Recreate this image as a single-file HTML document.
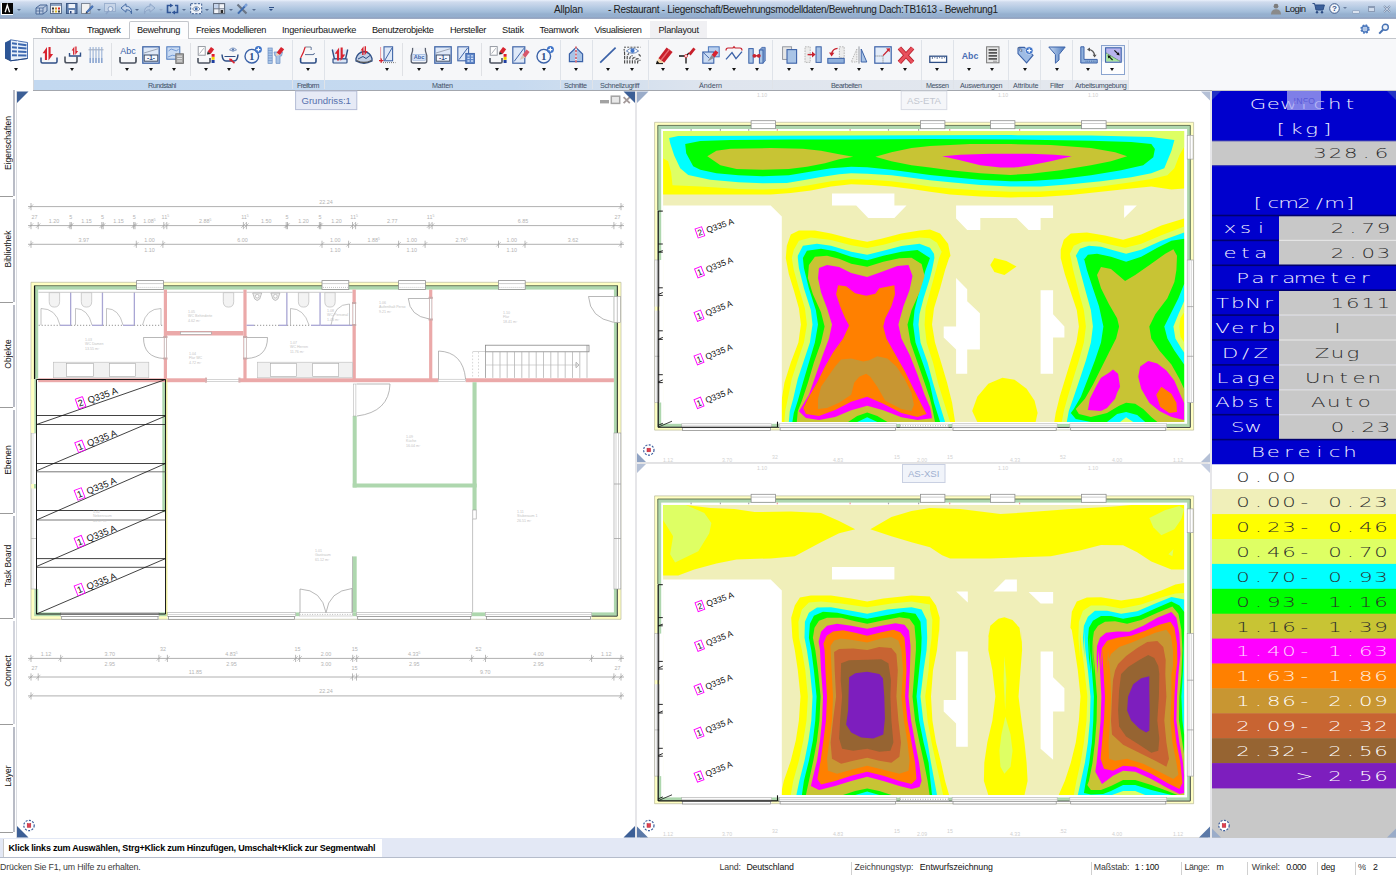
<!DOCTYPE html>
<html lang="de">
<head>
<meta charset="utf-8">
<title>Allplan - Restaurant</title>
<style>
*{box-sizing:border-box;margin:0;padding:0}
html,body{width:1396px;height:880px;overflow:hidden;background:#fff}
body{position:relative;font-family:"Liberation Sans","DejaVu Sans",sans-serif;font-size:10px;color:#1e1e1e}
.abs{position:absolute}
#title{position:absolute;left:0;top:0;width:1396px;height:19px;
 background:linear-gradient(#e9f0fb 0,#cfdbed 2px,#c2d2e8 5px,#b3c9e2 8px,#a2bcd9 12px,#96b0cf 14px,#94aece 17px,#919fbb 18px,#a6b2ca 19px)}
#title .t{position:absolute;top:3px;font-size:11px;color:#1b1b1b;white-space:nowrap;letter-spacing:-0.1px}
#tabs{position:absolute;left:0;top:19px;width:1396px;height:20px;background:#fff}
#tabs .tab{position:absolute;top:6px;font-size:10px;color:#1a1a1a;white-space:nowrap;letter-spacing:-0.25px}
#tabline{position:absolute;left:33px;top:38px;width:1363px;height:1px;background:#c3c6cb}
#tabact{position:absolute;left:129px;top:21px;width:60px;height:18px;border:1px solid #c3c6cb;border-bottom:none;background:#fdfdfe;border-radius:2px 2px 0 0}
#tablast{position:absolute;left:650px;top:21px;width:57px;height:17px;background:#f0f0f3}
#ribbon{position:absolute;left:33px;top:39px;width:1363px;height:51px;background:#f5f6f8;border-left:1px solid #d4d7dc}
#ribbon .bg{position:absolute;left:0;top:0;width:1095px;height:41px;background:#f6f7f9}
#ribbon .lab{position:absolute;left:0;top:41px;width:1095px;height:10px;background:linear-gradient(90deg,#c2d8f0 0,#c6daf0 480px,#d2dfee 580px,#dfe5ee 680px,#e4e8ee 1095px)}
#ribbon .rest{position:absolute;left:1095px;top:0;width:268px;height:51px;background:#f7f8fa}
#ribline{position:absolute;left:33px;top:90px;width:1363px;height:1px;background:#a3a7ae}
.glab{position:absolute;top:81px;font-size:7px;color:#44546a;white-space:nowrap;text-align:center;letter-spacing:-0.1px}
.gsep{position:absolute;top:40px;width:1px;height:49px;background:#dfe3e9}
.isep{position:absolute;top:43px;width:1px;height:33px;background:#dfe1e5}
.dd{position:absolute;top:67px;width:0;height:0;border-left:2.5px solid transparent;border-right:2.5px solid transparent;border-top:3px solid #111}
svg{position:absolute;overflow:visible}
#side{position:absolute;left:0;top:90px;width:16px;height:748px;background:#fff}
#side .st{position:absolute;left:-42px;width:100px;height:12px;line-height:12px;text-align:center;font-size:8.5px;color:#111;transform:rotate(-90deg);white-space:nowrap}
#side .sl{position:absolute;left:0;width:13px;height:1px;background:#9b9b9b}
#side .sv{position:absolute;left:13px;width:2px;background:#c9c9cf}
.vp{position:absolute;background:#fff;overflow:hidden}
.vtitle{position:absolute;font-size:10px;text-align:center;white-space:nowrap}
#cmd{position:absolute;left:0;top:838px;width:1396px;height:20px;background:#e3e8f5;border-bottom:1px solid #b5bccb}
#cmd .box{position:absolute;left:3px;top:1px;width:379px;height:18px;background:#fff;border-left:1px solid #c8c8c8}
#cmd .txt{position:absolute;left:8px;top:4px;font-size:9.2px;font-weight:bold;color:#000;white-space:nowrap;letter-spacing:-0.12px}
#status{position:absolute;left:0;top:859px;width:1396px;height:21px;background:#fff}
#status span{position:absolute;top:4px;font-size:8.8px;color:#333;white-space:nowrap;letter-spacing:-0.15px}
#status i{position:absolute;top:3px;width:1px;height:13px;background:#cfcfcf}
#info{position:absolute;left:1212px;top:90px;width:184px;height:748px;background:#c8c8c8;overflow:hidden;
 font-family:"DejaVu Sans Light","DejaVu Sans","Liberation Sans",sans-serif;font-weight:200}
#info .r{position:absolute;left:0;width:184px;height:25px;font-size:14px;line-height:25px;white-space:nowrap;letter-spacing:4.2px}
#info .r span{position:absolute;top:0;height:25px}
</style>
</head>
<body>
<div id="title">
<div class="abs" style="left:1px;top:2.5px;width:12px;height:12.5px;background:#fff"></div><div class="abs" style="left:2px;top:3px;width:10.5px;height:11px;background:#050505"></div>
<svg style="left:2px;top:3px" width="11" height="11" viewBox="0 0 11 11"><path d="M3.2 9.2 L5.3 2.2 L7.6 9.2" fill="none" stroke="#fff" stroke-width="1.3"/></svg>
<div class="abs" style="left:16.5px;top:8.5px;width:0;height:0;border-left:2px solid transparent;border-right:2px solid transparent;border-top:2.5px solid #5b7193"></div>
<svg style="left:35px;top:3px" width="13" height="12" viewBox="0 0 13 12"><path d="M1 5 L5 2 L12 2 L12 8 L8 11 L1 11 Z" fill="#b9c9e0" stroke="#4a6897" stroke-width="1"/><path d="M1 5 H8 V11 M8 5 L12 2 M4.5 5 V11 M1 8 H8" fill="none" stroke="#4a6897" stroke-width=".8"/></svg>
<svg style="left:50px;top:3px" width="12" height="11" viewBox="0 0 12 11"><rect x=".5" y=".5" width="11" height="10" fill="#f4f4f0" stroke="#5b6f8f"/><rect x="1" y="1" width="10" height="2" fill="#8ea4c4"/><rect x="2" y="4.5" width="2" height="2" fill="#333"/><rect x="5" y="4.5" width="2" height="2" fill="#c82"/><rect x="8" y="4.5" width="2" height="2" fill="#d22"/><rect x="5" y="7.5" width="2" height="2" fill="#db2"/><rect x="8" y="7.5" width="2" height="2" fill="#444"/><rect x="2" y="7.5" width="2" height="2" fill="#777"/></svg>
<svg style="left:66px;top:3px" width="12" height="11" viewBox="0 0 12 11"><rect x=".5" y=".5" width="10.5" height="10" fill="#5f7fae" stroke="#3c5783"/><rect x="2.5" y="1" width="6.5" height="4" fill="#eef2f8"/><rect x="3" y="7" width="5.5" height="3.5" fill="#e9edf5"/><rect x="4" y="8" width="1.5" height="2.5" fill="#27417a"/></svg>
<svg style="left:81px;top:3px" width="13" height="11" viewBox="0 0 13 11"><rect x=".5" y=".5" width="8.5" height="10" fill="#f1f1f1" stroke="#7d8796"/><path d="M5 9 L11 2.5 L12.3 3.7 L6.4 10 Z" fill="#4b7ac2" stroke="#2e5597" stroke-width=".6"/><path d="M5 9 L4.6 10.6 L6.4 10 Z" fill="#222"/></svg>
<div class="abs" style="left:96.5px;top:8.5px;width:0;height:0;border-left:2px solid transparent;border-right:2px solid transparent;border-top:2.5px solid #5b7193"></div>
<svg style="left:104px;top:3px" width="13" height="12" viewBox="0 0 13 12"><rect x=".5" y=".5" width="11" height="8" fill="#c9d6e8" stroke="#93a9c9" opacity=".8"/><circle cx="6.5" cy="6" r="2.5" fill="#dfe8f4" stroke="#8aa2c6"/><path d="M4.6 8 L2 11" stroke="#8aa2c6" stroke-width="1.4"/></svg>
<svg style="left:120px;top:3px" width="13" height="12" viewBox="0 0 13 12"><path d="M1 5 L6 .8 L6 3.2 C10 3.2 12 6 11.5 10.8 C10.8 8 9.5 6.8 6 6.8 L6 9.2 Z" fill="#c5d5ea" stroke="#456aa3" stroke-width="1"/></svg>
<div class="abs" style="left:135px;top:8.5px;width:0;height:0;border-left:2px solid transparent;border-right:2px solid transparent;border-top:2.5px solid #5b7193"></div>
<svg style="left:143px;top:3px" width="13" height="12" viewBox="0 0 13 12"><path d="M12 5 L7 .8 L7 3.2 C3 3.2 1 6 1.5 10.8 C2.2 8 3.5 6.8 7 6.8 L7 9.2 Z" fill="#b4c7e0" stroke="#8ea6c8" stroke-width="1"/></svg>
<div class="abs" style="left:158.5px;top:8.5px;width:0;height:0;border-left:2px solid transparent;border-right:2px solid transparent;border-top:2.5px solid #9db0cc"></div>
<svg style="left:166px;top:3px" width="13" height="12" viewBox="0 0 13 12"><path d="M4 2.5 H1.5 V9.5 H5 M9 2.5 H11.5 V9.5 H8" fill="none" stroke="#2f5597" stroke-width="1.6"/><path d="M4 .5 L7.3 2.5 L4 4.5 Z M9 7.5 L5.7 9.5 L9 11.5 Z" fill="#2f5597"/></svg>
<div class="abs" style="left:182px;top:8.5px;width:0;height:0;border-left:2px solid transparent;border-right:2px solid transparent;border-top:2.5px solid #5b7193"></div>
<svg style="left:190px;top:3px" width="13" height="12" viewBox="0 0 13 12"><rect x=".7" y=".7" width="11" height="10" fill="#eef3fa" stroke="#3b5a8f" stroke-width="1" stroke-dasharray="2.2 1.4"/><path d="M2.5 6 C4.5 3 8 3 10 6 C8 8.6 4.5 8.6 2.5 6Z" fill="#fff" stroke="#54698c" stroke-width=".8"/><circle cx="6.2" cy="5.8" r="1.5" fill="#3f6fb8"/></svg>
<div class="abs" style="left:205px;top:8.5px;width:0;height:0;border-left:2px solid transparent;border-right:2px solid transparent;border-top:2.5px solid #5b7193"></div>
<svg style="left:213px;top:3px" width="13" height="12" viewBox="0 0 13 12"><rect x=".6" y=".6" width="11" height="10" fill="#f2f4f8" stroke="#5f6a7c" stroke-width="1.1"/><rect x="1.2" y="1.2" width="4.6" height="4.2" fill="#c3d3ec"/><path d="M6 .6 V10.6 M.6 5.8 H11.6" stroke="#5f6a7c" stroke-width=".9"/><rect x="7.6" y="7" width="2.6" height="3" fill="#2b2b2b"/></svg>
<div class="abs" style="left:228.5px;top:8.5px;width:0;height:0;border-left:2px solid transparent;border-right:2px solid transparent;border-top:2.5px solid #5b7193"></div>
<svg style="left:236px;top:3px" width="13" height="12" viewBox="0 0 13 12"><path d="M1.5 1.5 L10.5 10.5" stroke="#6b7686" stroke-width="2.2"/><path d="M10.8 1.2 L2 10.6" stroke="#3f6cae" stroke-width="2"/><path d="M10.8 1.2 L8.6 3.5" stroke="#7fa5dd" stroke-width="2.2"/></svg>
<div class="abs" style="left:252px;top:8.5px;width:0;height:0;border-left:2px solid transparent;border-right:2px solid transparent;border-top:2.5px solid #5b7193"></div>
<div class="abs" style="left:268.5px;top:7px;width:5px;height:1px;background:#2f4f86"></div>
<div class="abs" style="left:269px;top:9px;width:0;height:0;border-left:2px solid transparent;border-right:2px solid transparent;border-top:2.5px solid #2f4f86"></div>
<span style="position:absolute;left:554.0px;top:4.7px;font-size:10px;line-height:10px;letter-spacing:-0.17px;white-space:nowrap;color:#202020;">Allplan</span>
<span style="position:absolute;left:608.0px;top:4.7px;font-size:10px;line-height:10px;letter-spacing:-0.31px;white-space:nowrap;color:#202020;">- Restaurant - Liegenschaft/Bewehrungsmodelldaten/Bewehrung Dach:TB1613 - Bewehrung1</span>
<svg style="left:1270px;top:3px" width="12" height="12" viewBox="0 0 12 12"><circle cx="6" cy="3.2" r="2.4" fill="#7d7d7d"/><path d="M1 11.5 C1 7.5 3.5 6.2 6 6.2 C8.5 6.2 11 7.5 11 11.5 Z" fill="#8a8a8a"/></svg>
<span style="position:absolute;left:1285.0px;top:4.2px;font-size:9.5px;line-height:9.5px;letter-spacing:-0.56px;white-space:nowrap;color:#1a1a1a;">Login</span>
<svg style="left:1312px;top:2px" width="14" height="12" viewBox="0 0 14 12"><path d="M.5 1.5 H2.6 L4 8 H11 L12.4 3 H3.2" fill="#3b5f9a" stroke="#2d4d84" stroke-width="1"/><circle cx="5" cy="10.3" r="1.2" fill="#2d4d84"/><circle cx="10" cy="10.3" r="1.2" fill="#2d4d84"/></svg>
<svg style="left:1328.5px;top:2.5px" width="11" height="11" viewBox="0 0 11 11"><circle cx="5.5" cy="5.5" r="4.8" fill="#f4f7fb" stroke="#3d5a8c" stroke-width="1"/><text x="5.5" y="8.3" font-size="8" font-weight="bold" text-anchor="middle" fill="#2d4d84" font-family="Liberation Sans, sans-serif">?</text></svg>
<div class="abs" style="left:1342.5px;top:7px;width:0;height:0;border-left:2px solid transparent;border-right:2px solid transparent;border-top:2.5px solid #6c809f"></div>
<div class="abs" style="left:1353px;top:11px;width:6px;height:1.5px;background:#d9e2ef;box-shadow:0 0 0 .5px #8b9bb5"></div>
<div class="abs" style="left:1368px;top:6px;width:7px;height:5.5px;border:1px solid #8b9bb5;border-top-width:2px;background:#cfdaea"></div>
<svg style="left:1383px;top:5px" width="8" height="8" viewBox="0 0 8 8"><path d="M1 1 L7 7 M7 1 L1 7" stroke="#7f90ac" stroke-width="1.8"/><path d="M1 1 L7 7 M7 1 L1 7" stroke="#dbe4f1" stroke-width=".7"/></svg>
</div>
<div id="tabline"></div><div id="tabact"></div><div id="tablast"></div>
<span style="position:absolute;left:41.0px;top:25.8px;font-size:9.2px;line-height:9.2px;letter-spacing:-0.65px;white-space:nowrap;color:#161616;">Rohbau</span>
<span style="position:absolute;left:87.0px;top:25.8px;font-size:9.2px;line-height:9.2px;letter-spacing:-0.57px;white-space:nowrap;color:#161616;">Tragwerk</span>
<span style="position:absolute;left:137.0px;top:25.8px;font-size:9.2px;line-height:9.2px;letter-spacing:-0.38px;white-space:nowrap;color:#161616;">Bewehrung</span>
<span style="position:absolute;left:196.0px;top:25.8px;font-size:9.2px;line-height:9.2px;letter-spacing:-0.30px;white-space:nowrap;color:#161616;">Freies Modellieren</span>
<span style="position:absolute;left:282.0px;top:25.8px;font-size:9.2px;line-height:9.2px;letter-spacing:-0.23px;white-space:nowrap;color:#161616;">Ingenieurbauwerke</span>
<span style="position:absolute;left:372.0px;top:25.8px;font-size:9.2px;line-height:9.2px;letter-spacing:-0.32px;white-space:nowrap;color:#161616;">Benutzerobjekte</span>
<span style="position:absolute;left:450.0px;top:25.8px;font-size:9.2px;line-height:9.2px;letter-spacing:-0.32px;white-space:nowrap;color:#161616;">Hersteller</span>
<span style="position:absolute;left:502.0px;top:25.8px;font-size:9.2px;line-height:9.2px;letter-spacing:-0.20px;white-space:nowrap;color:#161616;">Statik</span>
<span style="position:absolute;left:539.5px;top:25.8px;font-size:9.2px;line-height:9.2px;letter-spacing:-0.35px;white-space:nowrap;color:#161616;">Teamwork</span>
<span style="position:absolute;left:594.5px;top:25.8px;font-size:9.2px;line-height:9.2px;letter-spacing:-0.37px;white-space:nowrap;color:#161616;">Visualisieren</span>
<span style="position:absolute;left:658.5px;top:25.8px;font-size:9.2px;line-height:9.2px;letter-spacing:-0.27px;white-space:nowrap;color:#161616;">Planlayout</span>
<svg style="left:1359px;top:23px" width="12" height="12" viewBox="0 0 12 12"><circle cx="6" cy="6" r="3.6" fill="none" stroke="#4b78bd" stroke-width="2.2" stroke-dasharray="1.6 1.25"/><circle cx="6" cy="6" r="3" fill="#dbe6f6" stroke="#4b78bd" stroke-width="1.3"/><circle cx="6" cy="6" r="1.2" fill="#fff" stroke="#4b78bd" stroke-width=".6"/></svg>
<svg style="left:1378px;top:23px" width="12" height="12" viewBox="0 0 12 12"><circle cx="7.3" cy="4.3" r="3" fill="#eef3fa" stroke="#4672b4" stroke-width="1.4"/><path d="M5 6.7 L1.2 10.6" stroke="#4672b4" stroke-width="2"/></svg>
<div id="ribbon"><div class="bg"></div><div class="lab"></div><div class="rest"></div></div><div id="ribline"></div>
<div class="gsep" style="left:291.5px"></div>
<div class="gsep" style="left:324.0px"></div>
<div class="gsep" style="left:560.0px"></div>
<div class="gsep" style="left:591.5px"></div>
<div class="gsep" style="left:647.5px"></div>
<div class="gsep" style="left:772.0px"></div>
<div class="gsep" style="left:921.0px"></div>
<div class="gsep" style="left:952.5px"></div>
<div class="gsep" style="left:1007.5px"></div>
<div class="gsep" style="left:1040.0px"></div>
<div class="gsep" style="left:1072.0px"></div>
<div class="gsep" style="left:1127.5px"></div>
<div class="isep" style="left:111.0px"></div>
<div class="isep" style="left:190.0px"></div>
<div class="isep" style="left:402.0px"></div>
<div class="isep" style="left:481.0px"></div>
<span style="position:absolute;left:148.0px;top:81.5px;font-size:7.2px;line-height:7.2px;letter-spacing:-0.49px;white-space:nowrap;color:#3f4f66;">Rundstahl</span>
<span style="position:absolute;left:297.0px;top:81.5px;font-size:7.2px;line-height:7.2px;letter-spacing:-0.61px;white-space:nowrap;color:#3f4f66;">Freiform</span>
<span style="position:absolute;left:432.0px;top:81.5px;font-size:7.2px;line-height:7.2px;letter-spacing:-0.20px;white-space:nowrap;color:#3f4f66;">Matten</span>
<span style="position:absolute;left:564.0px;top:81.5px;font-size:7.2px;line-height:7.2px;letter-spacing:-0.43px;white-space:nowrap;color:#3f4f66;">Schnitte</span>
<span style="position:absolute;left:600.0px;top:81.5px;font-size:7.2px;line-height:7.2px;letter-spacing:-0.28px;white-space:nowrap;color:#3f4f66;">Schnellzugriff</span>
<span style="position:absolute;left:699.0px;top:81.5px;font-size:7.2px;line-height:7.2px;letter-spacing:-0.04px;white-space:nowrap;color:#3f4f66;">Ändern</span>
<span style="position:absolute;left:831.0px;top:81.5px;font-size:7.2px;line-height:7.2px;letter-spacing:-0.43px;white-space:nowrap;color:#3f4f66;">Bearbeiten</span>
<span style="position:absolute;left:926.0px;top:81.5px;font-size:7.2px;line-height:7.2px;letter-spacing:-0.44px;white-space:nowrap;color:#3f4f66;">Messen</span>
<span style="position:absolute;left:960.0px;top:81.5px;font-size:7.2px;line-height:7.2px;letter-spacing:-0.32px;white-space:nowrap;color:#3f4f66;">Auswertungen</span>
<span style="position:absolute;left:1013.0px;top:81.5px;font-size:7.2px;line-height:7.2px;letter-spacing:-0.16px;white-space:nowrap;color:#3f4f66;">Attribute</span>
<span style="position:absolute;left:1050.0px;top:81.5px;font-size:7.2px;line-height:7.2px;letter-spacing:-0.40px;white-space:nowrap;color:#3f4f66;">Filter</span>
<span style="position:absolute;left:1075.0px;top:81.5px;font-size:7.2px;line-height:7.2px;letter-spacing:-0.32px;white-space:nowrap;color:#3f4f66;">Arbeitsumgebung</span>
<svg style="left:4px;top:39px" width="25" height="23" viewBox="0 0 25 23"><path d="M1 3.5L6.5 .8V21.8L1 19Z" fill="#2c5596"/><path d="M6.5 .8L23.5 3.5V19.5L6.5 21.8Z" fill="#e9f0fa" stroke="#3b62a8" stroke-width=".9"/><path d="M8 4.2L22.5 6.2M8 8.2L22.5 9.6M8 12.2L22.5 13M8 16.2L22.5 16.4" stroke="#3d68b0" stroke-width="2"/><path d="M13.5 2V21" stroke="#e9f0fa" stroke-width="1.2"/><path d="M1 19L6.5 21.8L23.5 19.5" fill="none" stroke="#24457f" stroke-width="1"/></svg>
<div class="dd" style="left:13.7px;top:67.5px"></div>
<svg style="left:40.4px;top:46px" width="18" height="18" viewBox="0 0 18 18"><path d="M1 11.5V15.5Q1 17 2.5 17H15.5Q17 17 17 15.5V11.5" fill="none" stroke="#2f4f86" stroke-width="1.5"/><g transform="translate(0.3 0) scale(1)"><path d="M6.7 14V1L2.3 7.2H4.6V14Z" fill="#d8232f"/><path d="M8.2 1H10.3V8H12.8L8.2 14.6Z" fill="#d8232f"/></g></svg>
<svg style="left:63.7px;top:46px" width="18" height="18" viewBox="0 0 18 18"><path d="M5.5 7V10H16.5V6.5" fill="none" stroke="#2f4f86" stroke-width="1.4"/><path d="M1 10.5V15Q1 16.8 2.8 16.8H11.2Q13 16.8 13 15V10.5" fill="none" stroke="#4c5360" stroke-width="1.6"/><g transform="translate(6.2 0) scale(0.62)"><path d="M6.7 14V1L2.3 7.2H4.6V14Z" fill="#d8232f"/><path d="M8.2 1H10.3V8H12.8L8.2 14.6Z" fill="#d8232f"/></g></svg>
<div class="dd" style="left:70.2px;top:67.5px"></div>
<svg style="left:87.0px;top:46px" width="18" height="18" viewBox="0 0 18 18"><path d="M1.5 3.8H16.5" stroke="#8a93a3" stroke-width=".8"/><path d="M3.2 1V17M6.1 1V17M9 1V17M11.9 1V17M14.8 1V17" stroke="#9bb3d6" stroke-width="1.1"/><path d="M3.2 12V17M6.1 12V17M9 12V17M11.9 12V17M14.8 12V17" stroke="#7f9ccc" stroke-width="1.1"/></svg>
<svg style="left:118.9px;top:46px" width="18" height="18" viewBox="0 0 18 18"><text x="9" y="8.3" font-family="Liberation Sans, sans-serif" font-size="8.6" fill="#3b62a8" text-anchor="middle" textLength="15.5" lengthAdjust="spacingAndGlyphs">Abc</text><path d="M1 11V15.5Q1 17 2.5 17H15.5Q17 17 17 15.5V11" fill="none" stroke="#4c5360" stroke-width="1.7"/></svg>
<div class="dd" style="left:125.4px;top:67.5px"></div>
<svg style="left:142.2px;top:46px" width="18" height="18" viewBox="0 0 18 18"><rect x=".8" y=".8" width="16.4" height="16.4" fill="#dfe9f8" stroke="#4166a8" stroke-width="1.3"/><path d="M2 7L16 2.8" stroke="#8a93a3" stroke-width=".8"/><rect x="2.2" y="9" width="13.6" height="6.2" fill="#f6f8fc" stroke="#3a4a66" stroke-width="1"/><text x="9" y="14.3" font-family="Liberation Sans, sans-serif" font-size="6.4" font-weight="bold" fill="#2f4f86" text-anchor="middle">-1-</text></svg>
<div class="dd" style="left:148.7px;top:67.5px"></div>
<svg style="left:165.7px;top:46px" width="18" height="18" viewBox="0 0 18 18"><rect x=".8" y=".8" width="13" height="12.4" fill="#c9dbf3" stroke="#4a78bd" stroke-width="1"/><path d="M2.5 5Q5 1.5 8 4T12.5 3M2 11Q6 8 11 10" fill="none" stroke="#6b93d0" stroke-width=".9"/><rect x="9.8" y="7.8" width="7.6" height="9.6" fill="#a3a3a3" stroke="#6c6c6c" stroke-width=".9"/><path d="M11.2 10.2H16M11.2 12.6H16M11.2 15H16" stroke="#e8e8e8" stroke-width="1"/></svg>
<div class="dd" style="left:172.2px;top:67.5px"></div>
<svg style="left:197.0px;top:46px" width="18" height="18" viewBox="0 0 18 18"><rect x="1.2" y=".6" width="7" height="8.6" fill="#fff" stroke="#8a8f99" stroke-width=".9"/><path d="M2.6 7.6L6.8 2.2" stroke="#8a8f99" stroke-width=".7"/><path d="M1 12V16Q1 17 2.2 17H11.8Q13 17 13 16V12" fill="none" stroke="#4c5360" stroke-width="1.6"/><path d="M10.6 5.6L14 1L17.2 3.3L13.7 7.9Z" fill="#d8232f"/><path d="M10.6 5.6L13.7 7.9L10 8.6Z" fill="#222"/><rect x="14.6" y="8" width="3" height="2.8" fill="#e0202c"/><rect x="14.6" y="11" width="3" height="2.8" fill="#f2d500"/><rect x="14.6" y="14" width="3" height="3" fill="#1f3fa0"/></svg>
<div class="dd" style="left:203.5px;top:67.5px"></div>
<svg style="left:220.6px;top:46px" width="18" height="18" viewBox="0 0 18 18"><path d="M1 8.5Q1.5 15 5 15H13Q16.5 15 17 8.5" fill="none" stroke="#2f4f86" stroke-width="1.5"/><path d="M3.5 10.5H14.5" stroke="#2f4f86" stroke-width="1"/><path d="M8.5 3.8Q12 .2 15.5 3.8Q12 6.8 8.5 3.8Z" fill="#fff" stroke="#5a7ab0" stroke-width=".8"/><circle cx="12" cy="3.6" r="1.2" fill="#5a7ab0"/><path d="M13.5 17.2L9.2 13.4" stroke="#d8232f" stroke-width="1.6"/><path d="M8 12.4L11.6 13L9 15.6Z" fill="#d8232f"/></svg>
<div class="dd" style="left:227.1px;top:67.5px"></div>
<svg style="left:244.2px;top:46px" width="18" height="18" viewBox="0 0 18 18"><circle cx="7.8" cy="10.2" r="6.8" fill="#f6f8fc" stroke="#3b62a8" stroke-width="1.4"/><text x="7.8" y="14" font-family="Liberation Serif, serif" font-size="11" font-weight="bold" fill="#2f4f86" text-anchor="middle">1</text><circle cx="14.4" cy="3.6" r="3.5" fill="#3f74c9"/><path d="M12.4 3.6H16.4M14.4 1.6V5.6" stroke="#fff" stroke-width="1.2"/></svg>
<div class="dd" style="left:250.7px;top:67.5px"></div>
<svg style="left:266.8px;top:46px" width="18" height="18" viewBox="0 0 18 18"><rect x="1" y="2" width="4.2" height="15.4" fill="#a9c4e6" stroke="#6a8fc4" stroke-width=".7"/><path d="M1 4.5H5.2M1 7H5.2M1 9.5H5.2M1 12H5.2M1 14.5H5.2" stroke="#6a8fc4" stroke-width=".6"/><path d="M7 6H15.5L14.5 10H13V17.4H9V10H8Z" fill="#a9c4e6" stroke="#6a8fc4" stroke-width=".7"/><path d="M9.6 6.8L14 1L17.2 3.3L12.8 9Z" fill="#d8232f"/><path d="M9.6 6.8L12.8 9L9 9.8Z" fill="#f4d0b0"/></svg>
<svg style="left:299.4px;top:46px" width="18" height="18" viewBox="0 0 18 18"><path d="M6.2 1H12" stroke="#7a8494" stroke-width="1"/><path d="M6.2 1Q4.5 7 1.6 12" fill="none" stroke="#d8232f" stroke-width="1.2"/><path d="M1.6 12V15.4Q1.6 17 3.2 17H15.4Q17 17 17 15.4V12" fill="none" stroke="#2f4f86" stroke-width="1.6"/><path d="M12 1Q12.5 3 12 4M6 8.6H14Q15.4 8.6 15.4 7" fill="none" stroke="#5b7198" stroke-width="1"/></svg>
<div class="dd" style="left:305.9px;top:67.5px"></div>
<svg style="left:330.7px;top:46px" width="18" height="18" viewBox="0 0 18 18"><path d="M1.3 3.5L3.4 13H14.6L16.7 3.5" fill="#dfe9f8" stroke="#2f4f86" stroke-width="1.4"/><path d="M2 13H16V16.2Q16 17 15 17H3Q2 17 2 16.2Z" fill="#dbe6f6" stroke="#2f4f86" stroke-width="1.2"/><g transform="translate(1.4 0.5) scale(1.0)"><path d="M6.7 14V1L2.3 7.2H4.6V14Z" fill="#d8232f"/><path d="M8.2 1H10.3V8H12.8L8.2 14.6Z" fill="#d8232f"/></g></svg>
<svg style="left:354.8px;top:46px" width="18" height="18" viewBox="0 0 18 18"><path d="M1 12.5Q2.5 6.5 9 5.5Q15.5 6.5 17 12.5V15Q9 19.5 1 15Z" fill="#c2d0e6" stroke="#2f4f86" stroke-width="1.3"/><path d="M3 13L8 10.5L11 12.5L15 9.5" fill="none" stroke="#2f4f86" stroke-width="1"/><path d="M1.5 14.5Q9 18.5 16.5 14.5" fill="none" stroke="#555" stroke-width="1.4"/><g transform="translate(4 -0.5) scale(0.68)"><path d="M6.7 14V1L2.3 7.2H4.6V14Z" fill="#d8232f"/><path d="M8.2 1H10.3V8H12.8L8.2 14.6Z" fill="#d8232f"/></g></svg>
<svg style="left:378.0px;top:46px" width="18" height="18" viewBox="0 0 18 18"><rect x="6" y=".8" width="8.6" height="14" fill="#dfe9f8" stroke="#4166a8" stroke-width="1.1"/><path d="M7 14L14 2" stroke="#4166a8" stroke-width="1"/><path d="M2.6 1.5V13" stroke="#d8232f" stroke-width=".9" stroke-dasharray="1 1"/><path d="M5 16.6H17.5" stroke="#666" stroke-width=".9" stroke-dasharray="1 1"/><path d="M1 14.6H5.4M3.2 12.4V16.8" stroke="#d8232f" stroke-width="1.4"/></svg>
<div class="dd" style="left:384.5px;top:67.5px"></div>
<svg style="left:410.4px;top:46px" width="18" height="18" viewBox="0 0 18 18"><path d="M2.6 1.8Q3.2 5 1.2 9.5V15Q1.2 17 3.2 17H14.8Q16.8 17 16.8 15V9.5Q14.8 5 15.4 1.8" fill="#f2f4f8" stroke="#5a6170" stroke-width="1.3"/><rect x="2.8" y="8.4" width="12.4" height="5.8" fill="#dbe7f8" stroke="#8aa8d8" stroke-width=".6"/><text x="9" y="13.2" font-family="Liberation Sans, sans-serif" font-size="5.6" font-weight="bold" fill="#3b62a8" text-anchor="middle">Abc</text></svg>
<div class="dd" style="left:416.9px;top:67.5px"></div>
<svg style="left:433.8px;top:46px" width="18" height="18" viewBox="0 0 18 18"><rect x=".8" y=".8" width="16.4" height="16.4" fill="#dfe9f8" stroke="#4166a8" stroke-width="1.3"/><path d="M2 7L16 2.8" stroke="#8a93a3" stroke-width=".8"/><rect x="2.2" y="9" width="13.6" height="6.2" fill="#f6f8fc" stroke="#3a4a66" stroke-width="1"/><text x="9" y="14.3" font-family="Liberation Sans, sans-serif" font-size="6.4" font-weight="bold" fill="#2f4f86" text-anchor="middle">-1-</text></svg>
<div class="dd" style="left:440.3px;top:67.5px"></div>
<svg style="left:457.0px;top:46px" width="18" height="18" viewBox="0 0 18 18"><rect x=".8" y=".8" width="10.8" height="14" fill="#dfe9f8" stroke="#4166a8" stroke-width="1.1"/><path d="M2 13.6L10.6 2" stroke="#4166a8" stroke-width="1"/><rect x="8.8" y="7.4" width="8.6" height="10" fill="#5e86c8" stroke="#3b62a8" stroke-width=".9"/><path d="M10.4 9.8H12.6M14 9.8H16.2M10.4 12.4H12.6M14 12.4H16.2M10.4 15H12.6M14 15H16.2" stroke="#cfe0f8" stroke-width="1.3"/></svg>
<div class="dd" style="left:463.5px;top:67.5px"></div>
<svg style="left:488.9px;top:46px" width="18" height="18" viewBox="0 0 18 18"><rect x="1.2" y=".6" width="7" height="8.6" fill="#fff" stroke="#8a8f99" stroke-width=".9"/><path d="M2.6 7.6L6.8 2.2" stroke="#8a8f99" stroke-width=".7"/><path d="M1 12V16Q1 17 2.2 17H11.8Q13 17 13 16V12" fill="none" stroke="#4c5360" stroke-width="1.6"/><path d="M10.6 5.6L14 1L17.2 3.3L13.7 7.9Z" fill="#d8232f"/><path d="M10.6 5.6L13.7 7.9L10 8.6Z" fill="#222"/><rect x="14.6" y="8" width="3" height="2.8" fill="#e0202c"/><rect x="14.6" y="11" width="3" height="2.8" fill="#f2d500"/><rect x="14.6" y="14" width="3" height="3" fill="#1f3fa0"/></svg>
<div class="dd" style="left:495.4px;top:67.5px"></div>
<svg style="left:512.2px;top:46px" width="18" height="18" viewBox="0 0 18 18"><rect x=".8" y=".8" width="12" height="16.4" fill="#dfe9f8" stroke="#4166a8" stroke-width="1.2"/><path d="M2.2 15.4L12 2.2" stroke="#4166a8" stroke-width="1"/><path d="M10.4 9L14.6 3.6L17.6 6L13.4 11.4Z" fill="#d9576a"/><path d="M10.4 9L13.4 11.4L7.6 14Z" fill="#d8c8b8"/></svg>
<div class="dd" style="left:518.7px;top:67.5px"></div>
<svg style="left:535.5px;top:46px" width="18" height="18" viewBox="0 0 18 18"><circle cx="7.8" cy="10.2" r="6.8" fill="#f6f8fc" stroke="#3b62a8" stroke-width="1.4"/><text x="7.8" y="14" font-family="Liberation Serif, serif" font-size="11" font-weight="bold" fill="#2f4f86" text-anchor="middle">1</text><circle cx="14.4" cy="3.6" r="3.5" fill="#3f74c9"/><path d="M12.4 3.6H16.4M14.4 1.6V5.6" stroke="#fff" stroke-width="1.2"/></svg>
<div class="dd" style="left:542.0px;top:67.5px"></div>
<svg style="left:567.4px;top:46px" width="18" height="18" viewBox="0 0 18 18"><path d="M2.4 8L9 1.6L15.6 8V15.6H2.4Z" fill="#a9c4e6" stroke="#3b62a8" stroke-width="1.2"/><path d="M9 .6V16.6" stroke="#fff" stroke-width="1.4"/><path d="M9 .6V16.6" stroke="#c8232f" stroke-width="1.2" stroke-dasharray="2.2 1.2"/></svg>
<div class="dd" style="left:573.9px;top:67.5px"></div>
<svg style="left:599.2px;top:46px" width="18" height="18" viewBox="0 0 18 18"><path d="M1.2 16.6L16.6 1.6" stroke="#3b62a8" stroke-width="1.7"/></svg>
<div class="dd" style="left:605.7px;top:67.5px"></div>
<svg style="left:623.0px;top:46px" width="18" height="18" viewBox="0 0 18 18"><path d="M1 1.2H17.4" stroke="#555" stroke-width="1" stroke-dasharray="2 1.2"/><path d="M3.4 5Q9.4 -.4 15.6 5Q9.4 9.6 3.4 5Z" fill="#fff" stroke="#5a7ab0" stroke-width=".9"/><circle cx="9.5" cy="4.8" r="2.1" fill="#3f74c9"/><path d="M1.6 17.4V9Q1.6 5 1 3M4.2 17.4V11.5Q4.2 8.8 6 7.6M6.8 17.4V12.4Q7 10 9.6 9.6M9.4 17.4V13.4Q9.8 11.4 13 11.2M12 17.4V14.4Q12.4 12.8 16 12.6M14.6 17.4V15.6Q15 14.4 17.6 14.2M15.6 8.4Q17 9 17.6 10.4" fill="none" stroke="#4a4a4a" stroke-width="1.15" stroke-dasharray="3.2 .9"/></svg>
<div class="dd" style="left:629.5px;top:67.5px"></div>
<svg style="left:654.9px;top:46px" width="18" height="18" viewBox="0 0 18 18"><path d="M3.4 12.2L11.6 1.4L17.6 6L9.2 16.8Z" fill="#c8202c"/><path d="M6 14.2L14.4 3.4" stroke="#e86a72" stroke-width="1.4"/><path d="M3.4 12.2L9.2 16.8L1.2 17.6Z" fill="#f0d2a6"/><path d="M1.2 17.6L4.4 17.3L2 14.6Z" fill="#111"/><path d="M1 17.6H8" stroke="#111" stroke-width="1"/></svg>
<div class="dd" style="left:661.4px;top:67.5px"></div>
<svg style="left:678.2px;top:46px" width="18" height="18" viewBox="0 0 18 18"><path d="M1 10H8V17.4M8 10L11 7" fill="none" stroke="#111" stroke-width="1.3"/><path d="M10.4 7.6L15.4 1.4L17.6 3.2L12.6 9.4Z" fill="#c8202c"/><circle cx="8" cy="10" r="1.5" fill="#fff" stroke="#d8232f" stroke-width=".8"/></svg>
<div class="dd" style="left:684.7px;top:67.5px"></div>
<svg style="left:701.7px;top:46px" width="18" height="18" viewBox="0 0 18 18"><rect x="6.4" y=".8" width="10.8" height="10" fill="#b9cfee" stroke="#4a78bd" stroke-width="1"/><rect x=".8" y="6" width="11" height="11.2" fill="#c9dbf3" stroke="#3b62a8" stroke-width="1.1"/><path d="M1 6.2L7 12" stroke="#3b62a8" stroke-width=".9"/><path d="M9.6 9L13.4 4.2L16.4 6.6L12.6 11.4Z" fill="#d8232f"/><path d="M9.6 9L12.6 11.4L5.6 15.6Z" fill="#8a8f99"/></svg>
<div class="dd" style="left:708.2px;top:67.5px"></div>
<svg style="left:725.0px;top:46px" width="18" height="18" viewBox="0 0 18 18"><path d="M1 4.4Q1 2 3 2H8L9 .8L10 2H15Q17 2 17 4.4" fill="none" stroke="#c8232f" stroke-width="1.2"/><path d="M1 13.4L7 6.6L11 12.6L17 5.6" fill="none" stroke="#3b62a8" stroke-width="1.3"/></svg>
<div class="dd" style="left:731.5px;top:67.5px"></div>
<svg style="left:748.3px;top:46px" width="18" height="18" viewBox="0 0 18 18"><rect x=".8" y="2.6" width="4.4" height="14.6" fill="#a9c4e6" stroke="#3b62a8" stroke-width="1"/><path d="M11.4 4.4L13.8 1.4H17.2V15L14.8 17.2" fill="#7f9fd0" stroke="#3b62a8" stroke-width=".8"/><rect x="11.4" y="4" width="3.6" height="13.2" fill="#a9c4e6" stroke="#3b62a8" stroke-width="1"/><path d="M6.4 9.8H11" stroke="#c8232f" stroke-width="1.4"/><circle cx="6.4" cy="9.8" r="1.9" fill="#c8232f"/><circle cx="10.8" cy="9.8" r="1.9" fill="#c8232f"/></svg>
<div class="dd" style="left:754.8px;top:67.5px"></div>
<svg style="left:780.4px;top:46px" width="18" height="18" viewBox="0 0 18 18"><rect x="2.6" y=".8" width="9" height="12.6" fill="#e6e6e6" stroke="#8a8f99" stroke-width=".9"/><rect x="7" y="3.6" width="9.6" height="13.6" fill="#a9c4e6" stroke="#3b62a8" stroke-width="1.1"/></svg>
<div class="dd" style="left:786.9px;top:67.5px"></div>
<svg style="left:803.5px;top:46px" width="18" height="18" viewBox="0 0 18 18"><rect x="1" y=".8" width="5.2" height="15.6" fill="#ececec" stroke="#b0b0b0" stroke-width=".9" stroke-dasharray="1.6 1"/><rect x="12" y=".8" width="5.2" height="15.6" fill="#a9c4e6" stroke="#3b62a8" stroke-width="1"/><path d="M3.6 8.6H9" stroke="#c8232f" stroke-width="1.4"/><path d="M8 5.6L11.6 8.6L8 11.6Z" fill="#c8232f"/></svg>
<div class="dd" style="left:810.0px;top:67.5px"></div>
<svg style="left:827.0px;top:46px" width="18" height="18" viewBox="0 0 18 18"><rect x="12.4" y=".8" width="4.8" height="11" fill="#ececec" stroke="#b0b0b0" stroke-width=".9" stroke-dasharray="1.6 1"/><rect x=".8" y="12.4" width="16.4" height="4.8" fill="#8fb0dc" stroke="#3b62a8" stroke-width="1"/><path d="M10.6 2.4Q5.6 2.6 4.6 8" fill="none" stroke="#c8232f" stroke-width="1.4"/><path d="M2 6.6L4.6 10.6L7.4 6.8Z" fill="#c8232f"/></svg>
<div class="dd" style="left:833.5px;top:67.5px"></div>
<svg style="left:850.4px;top:46px" width="18" height="18" viewBox="0 0 18 18"><path d="M9 .4V17.6" stroke="#8a8f99" stroke-width=".9"/><path d="M6.8 3V16H1.2Z" fill="#eee" stroke="#b0b0b0" stroke-width=".9" stroke-dasharray="1.4 1"/><path d="M11.2 3V16H16.8Z" fill="#a9c4e6" stroke="#3b62a8" stroke-width="1"/></svg>
<div class="dd" style="left:856.9px;top:67.5px"></div>
<svg style="left:873.7px;top:46px" width="18" height="18" viewBox="0 0 18 18"><rect x=".8" y=".8" width="16.4" height="16.4" fill="#e3ecf8" stroke="#3b62a8" stroke-width="1.2"/><path d="M1.4 10H9V17" fill="none" stroke="#666" stroke-width=".9" stroke-dasharray="1 1"/><path d="M9 9.6L14.6 3.8" stroke="#c8232f" stroke-width="1.3"/><path d="M12 2.6L16 2.2L15.6 6.2Z" fill="#c8232f"/></svg>
<div class="dd" style="left:880.2px;top:67.5px"></div>
<svg style="left:896.7px;top:46px" width="18" height="18" viewBox="0 0 18 18"><path d="M2.4 2L15.6 16.4M15.6 2L2.4 16.4" stroke="#b8202c" stroke-width="4.6"/><path d="M2.4 2L15.6 16.4M15.6 2L2.4 16.4" stroke="#e8505c" stroke-width="3"/></svg>
<div class="dd" style="left:903.2px;top:67.5px"></div>
<svg style="left:928.6px;top:46px" width="18" height="18" viewBox="0 0 18 18"><rect x=".8" y="10.2" width="16.8" height="6.2" fill="#fff" stroke="#2f4f86" stroke-width="1.3"/><path d="M3.4 10.6V13M5.8 10.6V12.2M8.2 10.6V13M10.6 10.6V12.2M13 10.6V13M15.4 10.6V12.2" stroke="#5b7198" stroke-width=".9"/></svg>
<div class="dd" style="left:935.1px;top:67.5px"></div>
<svg style="left:960.7px;top:46px" width="18" height="18" viewBox="0 0 18 18"><text x="9" y="13.4" font-family="Liberation Sans, sans-serif" font-size="9.4" font-weight="bold" fill="#4a6eb4" text-anchor="middle" textLength="16.5" lengthAdjust="spacingAndGlyphs">Abc</text></svg>
<div class="dd" style="left:967.2px;top:67.5px"></div>
<svg style="left:983.6px;top:46px" width="18" height="18" viewBox="0 0 18 18"><rect x="2.6" y=".8" width="12.4" height="16" fill="#e6e6e6" stroke="#7a7a7a" stroke-width="1"/><path d="M4.6 3.8H13M4.6 6.8H13M4.6 9.8H13M4.6 12.8H13" stroke="#555" stroke-width="1.7"/><path d="M9 15.2H13" stroke="#999" stroke-width="1"/></svg>
<div class="dd" style="left:990.1px;top:67.5px"></div>
<svg style="left:1016.0px;top:46px" width="18" height="18" viewBox="0 0 18 18"><path d="M2 7.6V2.8Q2 1.4 3.4 1.4H8.4L17 9.2L10.6 16.8Z" fill="#9fbce4" stroke="#3b62a8" stroke-width="1.1"/><circle cx="4.6" cy="4" r="1.3" fill="#fff" stroke="#3b62a8" stroke-width=".7"/><path d="M2.2 1.2Q5 3 6 6" fill="none" stroke="#777" stroke-width=".7"/><circle cx="13.2" cy="4.6" r="3.9" fill="#3f74c9" stroke="#fff" stroke-width=".6"/><path d="M11 4.6H15.4M13.2 2.4V6.8" stroke="#fff" stroke-width="1.3"/></svg>
<div class="dd" style="left:1022.5px;top:67.5px"></div>
<svg style="left:1048.0px;top:46px" width="18" height="18" viewBox="0 0 18 18"><defs><linearGradient id="fg" x1="0" x2="1"><stop offset="0" stop-color="#c9dbf3"/><stop offset="1" stop-color="#4a78bd"/></linearGradient></defs><path d="M.8 1H17.2L11 8.6V14L7.4 17.2V8.6Z" fill="url(#fg)" stroke="#3b62a8" stroke-width="1"/></svg>
<div class="dd" style="left:1054.5px;top:67.5px"></div>
<svg style="left:1079.8px;top:46px" width="18" height="18" viewBox="0 0 18 18"><path d="M.8 .8H4V13.4H17.2V17H.8Z" fill="#8fb0dc" stroke="#3b62a8" stroke-width="1"/><path d="M5.6 15.2H16" stroke="#2f4f86" stroke-width=".8" stroke-dasharray=".8 1"/><path d="M8.4 3.4Q14 4 14.6 9.6" fill="none" stroke="#555" stroke-width="1.2"/><path d="M7 3.4L10 1.4L10 5.4Z M14.6 11.6L12.6 8.8L16.6 8.8Z" fill="#555"/></svg>
<div class="dd" style="left:1086.3px;top:67.5px"></div>
<div class="abs" style="left:1101px;top:45px;width:23.5px;height:30px;border:1px solid #8aa4cf;background:linear-gradient(#e8eefa 0,#e8eefa 55%,#fdfdfe 56%)"></div>
<svg style="left:1103.6px;top:47px" width="18" height="18" viewBox="0 0 18 18"><rect x="1.6" y=".8" width="15.6" height="14.4" fill="#b9b4ee" stroke="#3b62a8" stroke-width="1.1"/><path d="M2.2 6L2.2 14.6H16.6Z" fill="#a6e69c"/><path d="M2.2 6L16.6 14.6" stroke="#3a6a3a" stroke-width=".8" stroke-dasharray="1.4 1"/><path d="M10.4 3.4L14.4 7.2" stroke="#111" stroke-width="1.2"/><path d="M15.6 8.4L12.4 7.6L14.8 5.2Z" fill="#111"/><path d="M8.6 13L4.8 9.4" stroke="#111" stroke-width="1.2"/><path d="M3.6 8.2L6.8 9L4.4 11.4Z" fill="#111"/></svg>
<div class="dd" style="left:1110.1px;top:67.5px"></div>
<svg id="plan1" style="left:0;top:0" width="1396" height="880" viewBox="0 0 1396 880">
<rect x="16.0" y="91.0" width="620.0" height="747.0" fill="#fff" />
<rect x="15.0" y="91.0" width="1.6" height="747.0" fill="#c4c7d0" />
<rect x="635.0" y="91.0" width="2.0" height="747.0" fill="#e6e6e9" />
<rect x="31.0" y="282.3" width="590.0" height="3.4" fill="#ffffc2" />
<rect x="617.6" y="282.3" width="3.4" height="151.0" fill="#ffffc2" />
<rect x="617.6" y="589.0" width="3.4" height="30.3" fill="#ffffc2" />
<rect x="31.0" y="282.3" width="3.4" height="337.0" fill="#ffffc2" />
<rect x="31.0" y="616.0" width="30.0" height="3.3" fill="#ffffc2" />
<rect x="591.6" y="616.0" width="29.4" height="3.3" fill="#ffffc2" />
<rect x="159.0" y="616.0" width="8.4" height="3.3" fill="#ffffc2" />
<rect x="34.4" y="285.7" width="583.2" height="3.9" fill="#aed7ae" />
<rect x="613.9" y="285.7" width="3.7" height="147.5" fill="#aed7ae" />
<rect x="613.9" y="589.0" width="3.7" height="27.3" fill="#aed7ae" />
<rect x="34.4" y="285.7" width="3.8" height="93.0" fill="#aed7ae" />
<rect x="34.4" y="589.0" width="3.8" height="27.0" fill="#aed7ae" />
<rect x="34.4" y="612.4" width="27.0" height="3.8" fill="#aed7ae" />
<rect x="591.6" y="612.4" width="26.0" height="3.8" fill="#aed7ae" />
<rect x="159.0" y="612.4" width="8.4" height="3.8" fill="#aed7ae" />
<rect x="295.6" y="612.4" width="4.0" height="3.8" fill="#aed7ae" />
<rect x="352.7" y="612.4" width="4.0" height="3.8" fill="#aed7ae" />
<rect x="471.7" y="612.4" width="13.8" height="3.8" fill="#aed7ae" />
<path d="M31.0 282.3H621.0V619.3H31.0Z" stroke="#b9b9a0" stroke-width="0.7" fill="none" />
<path d="M34.4 379V285.7H617.5V433" stroke="#4d5a3a" stroke-width="0.8" fill="none" />
<path d="M34.6 285.7L34.6 379.0" stroke="#111" stroke-width="1.2" fill="none" />
<path d="M617.3 285.7L617.3 433.0" stroke="#333" stroke-width="0.9" fill="none" />
<path d="M617.3 589.0L617.3 616.0" stroke="#333" stroke-width="0.9" fill="none" />
<path d="M591.0 616.2L617.3 616.2" stroke="#333" stroke-width="0.9" fill="none" />
<rect x="163.8" y="289.6" width="3.2" height="90.0" fill="#eba9a9" />
<rect x="243.4" y="289.6" width="3.2" height="90.0" fill="#eba9a9" />
<rect x="352.5" y="289.6" width="3.3" height="90.0" fill="#eba9a9" />
<rect x="429.1" y="289.6" width="3.2" height="90.0" fill="#eba9a9" />
<rect x="167.0" y="331.0" width="76.4" height="4.5" fill="#eba9a9" />
<rect x="180.3" y="332.0" width="31.1" height="2.5" fill="#fff" stroke="#999" stroke-width=".6"/>
<rect x="38.2" y="378.3" width="168.0" height="3.9" fill="#eba9a9" />
<rect x="239.4" y="378.3" width="199.0" height="3.9" fill="#eba9a9" />
<rect x="465.6" y="378.3" width="148.3" height="3.9" fill="#eba9a9" />
<rect x="206.0" y="379.3" width="33.4" height="2.0" fill="#fff" stroke="#aaa" stroke-width=".5"/>
<rect x="205.0" y="377.6" width="2.0" height="5.0" fill="#d8b0b0" />
<rect x="238.4" y="377.6" width="2.0" height="5.0" fill="#d8b0b0" />
<rect x="352.7" y="416.0" width="4.0" height="71.5" fill="#aed7ae" />
<rect x="352.7" y="483.5" width="124.0" height="4.0" fill="#aed7ae" />
<rect x="472.5" y="382.2" width="4.1" height="128.0" fill="#aed7ae" />
<rect x="472.8" y="510.0" width="3.4" height="9.0" fill="#fff" stroke="#999" stroke-width=".6"/>
<path d="M472.6 519.0L472.6 612.4" stroke="#aaa" stroke-width="0.7" fill="none" />
<rect x="352.7" y="556.4" width="4.0" height="56.0" fill="#aed7ae" />
<path d="M352.5 556.4L352.5 612.4" stroke="#999" stroke-width="0.6" fill="none" />
<rect x="162.3" y="382.2" width="3.2" height="130.0" fill="#aed7ae" />
<rect x="70.0" y="292.3" width="1.3" height="33.5" fill="#a9a6d4" />
<rect x="101.8" y="292.3" width="1.3" height="33.5" fill="#a9a6d4" />
<rect x="133.7" y="292.3" width="1.3" height="33.5" fill="#a9a6d4" />
<rect x="286.2" y="292.3" width="1.3" height="33.5" fill="#a9a6d4" />
<rect x="319.4" y="292.3" width="1.3" height="33.5" fill="#a9a6d4" />
<rect x="320.5" y="324.6" width="32.0" height="1.4" fill="#a9a6d4" />
<path d="M38.6 292.3L163.8 292.3" stroke="#bdbdbd" stroke-width="0.8" fill="none" />
<path d="M167.0 292.3L243.4 292.3" stroke="#bdbdbd" stroke-width="0.8" fill="none" />
<path d="M246.6 292.3L352.5 292.3" stroke="#bdbdbd" stroke-width="0.8" fill="none" />
<path d="M60.0 325.3L71.0 325.3" stroke="#a9a6d4" stroke-width="1.3" fill="none" />
<path d="M92.0 325.3L102.8 325.3" stroke="#a9a6d4" stroke-width="1.3" fill="none" />
<path d="M123.0 325.3L134.0 325.3" stroke="#a9a6d4" stroke-width="1.3" fill="none" />
<path d="M38.6 325.3L60.0 325.3" stroke="#aaa" stroke-width="1.2" fill="none" stroke-dasharray="1.2 1.8"/>
<path d="M71.0 325.3L92.0 325.3" stroke="#aaa" stroke-width="1.2" fill="none" stroke-dasharray="1.2 1.8"/>
<path d="M102.8 325.3L123.0 325.3" stroke="#aaa" stroke-width="1.2" fill="none" stroke-dasharray="1.2 1.8"/>
<path d="M134.0 325.3L163.8 325.3" stroke="#aaa" stroke-width="1.2" fill="none" stroke-dasharray="1.2 1.8"/>
<path d="M246.6 325.3L254.0 325.3" stroke="#a9a6d4" stroke-width="1.3" fill="none" />
<path d="M279.0 325.3L287.0 325.3" stroke="#a9a6d4" stroke-width="1.3" fill="none" />
<path d="M311.0 325.3L320.0 325.3" stroke="#a9a6d4" stroke-width="1.3" fill="none" />
<path d="M254.0 325.3L279.0 325.3" stroke="#aaa" stroke-width="1.2" fill="none" stroke-dasharray="1.2 1.8"/>
<path d="M287.0 325.3L311.0 325.3" stroke="#aaa" stroke-width="1.2" fill="none" stroke-dasharray="1.2 1.8"/>
<path d="M49.2 292.6V301.6Q49.2 307.1 54.4 307.1Q59.6 307.1 59.6 301.6V292.6Z" stroke="#bbb" stroke-width="0.7" fill="#f3f3f3" />
<path d="M81.3 292.6V301.6Q81.3 307.1 86.5 307.1Q91.7 307.1 91.7 301.6V292.6Z" stroke="#bbb" stroke-width="0.7" fill="#f3f3f3" />
<path d="M223.3 292.6V301.6Q223.3 307.1 228.5 307.1Q233.7 307.1 233.7 301.6V292.6Z" stroke="#bbb" stroke-width="0.7" fill="#f3f3f3" />
<path d="M298.4 292.6V301.6Q298.4 307.1 303.6 307.1Q308.8 307.1 308.8 301.6V292.6Z" stroke="#bbb" stroke-width="0.7" fill="#f3f3f3" />
<path d="M324.8 292.6V301.6Q324.8 307.1 330.0 307.1Q335.2 307.1 335.2 301.6V292.6Z" stroke="#bbb" stroke-width="0.7" fill="#f3f3f3" />
<path d="M252.7 293H261.7L259.7 299Q257.2 302 254.7 299Z" stroke="#aaa" stroke-width="0.7" fill="#eee" />
<circle cx="257.2" cy="296.2" r="1.8" fill="#fff" stroke="#aaa" stroke-width=".6"/>
<path d="M270.9 293H279.9L277.9 299Q275.4 302 272.9 299Z" stroke="#aaa" stroke-width="0.7" fill="#eee" />
<circle cx="275.4" cy="296.2" r="1.8" fill="#fff" stroke="#aaa" stroke-width=".6"/>
<path d="M41 325V308.5Q56 308.5 60 325" stroke="#aaa" stroke-width="0.7" fill="none" />
<path d="M75.5 325V308.5Q88 308.5 92 325" stroke="#aaa" stroke-width="0.7" fill="none" />
<path d="M106.5 325V308.5Q119 308.5 123 325" stroke="#aaa" stroke-width="0.7" fill="none" />
<path d="M161 325V308.5Q146 308.5 142.5 325" stroke="#aaa" stroke-width="0.7" fill="none" />
<path d="M290.5 325V308.5Q304 308.5 309 325" stroke="#aaa" stroke-width="0.7" fill="none" />
<path d="M349.5 325V304Q334 304 331 325" stroke="#aaa" stroke-width="0.7" fill="none" />
<path d="M164 337.5H143.5Q143.5 357.5 164 358.5" stroke="#999" stroke-width="0.7" fill="none" />
<path d="M246.6 337.5H267.5Q267.5 357.5 246.6 358.5" stroke="#999" stroke-width="0.7" fill="none" />
<rect x="164.3" y="337.5" width="2.2" height="21.0" fill="#fff" stroke="#aaa" stroke-width=".5"/>
<rect x="244.0" y="337.5" width="2.2" height="21.0" fill="#fff" stroke="#aaa" stroke-width=".5"/>
<rect x="163.3" y="336.0" width="4.2" height="2.0" fill="#c9a9a9" />
<rect x="163.3" y="357.5" width="4.2" height="2.0" fill="#c9a9a9" />
<rect x="243.0" y="336.0" width="4.2" height="2.0" fill="#c9a9a9" />
<rect x="243.0" y="357.5" width="4.2" height="2.0" fill="#c9a9a9" />
<rect x="53.3" y="362.2" width="95.5" height="15.6" fill="#f1f1f1" stroke="#bbb" stroke-width=".6"/>
<rect x="66.6" y="363.5" width="26.7" height="13.0" fill="#fff" stroke="#aaa" stroke-width=".6"/>
<rect x="109.5" y="363.5" width="26.0" height="13.0" fill="#fff" stroke="#aaa" stroke-width=".6"/>
<rect x="257.6" y="362.2" width="95.0" height="15.6" fill="#f1f1f1" stroke="#bbb" stroke-width=".6"/>
<rect x="270.5" y="363.5" width="26.0" height="13.0" fill="#fff" stroke="#aaa" stroke-width=".6"/>
<rect x="312.7" y="363.5" width="26.0" height="13.0" fill="#fff" stroke="#aaa" stroke-width=".6"/>
<path d="M429.3 298.5H408.3Q409.5 316 429.3 319" stroke="#999" stroke-width="0.7" fill="none" />
<rect x="429.6" y="298.0" width="2.2" height="21.5" fill="#fff" stroke="#aaa" stroke-width=".5"/>
<rect x="428.6" y="296.8" width="4.2" height="2.0" fill="#c9a9a9" />
<rect x="428.6" y="318.5" width="4.2" height="2.0" fill="#c9a9a9" />
<rect x="353.0" y="303.0" width="2.4" height="22.0" fill="#fff" stroke="#aaa" stroke-width=".5"/>
<rect x="352.0" y="302.0" width="4.2" height="2.0" fill="#c9a9a9" />
<rect x="352.0" y="324.0" width="4.2" height="2.0" fill="#c9a9a9" />
<path d="M438.5 379V351Q463 352 465.6 379" stroke="#999" stroke-width="0.7" fill="none" />
<rect x="438.5" y="379.2" width="27.1" height="2.2" fill="#fff" stroke="#aaa" stroke-width=".5"/>
<path d="M356.5 384H390Q389 412 357 416" stroke="#999" stroke-width="0.7" fill="none" />
<rect x="353.3" y="384.0" width="2.6" height="32.0" fill="#fff" stroke="#aaa" stroke-width=".5"/>
<path d="M613.5 296.5H588.5Q590 318 613.5 322.3" stroke="#999" stroke-width="0.7" fill="none" />
<rect x="614.0" y="296.5" width="6.5" height="26.0" fill="#fff" stroke="#999" stroke-width=".6"/>
<path d="M617.3 296.5L617.3 322.5" stroke="#999" stroke-width="0.6" fill="none" />
<rect x="485.5" y="345.2" width="103.5" height="6.6" fill="#fff" stroke="#888" stroke-width=".8"/>
<path d="M587.0 345.2L587.0 351.8" stroke="#888" stroke-width="0.7" fill="none" />
<path d="M485.5 351.8L485.5 377.9" stroke="#888" stroke-width="0.7" fill="none" />
<path d="M492.8 351.8L492.8 377.9" stroke="#aaa" stroke-width="0.7" fill="none" />
<path d="M500.0 351.8L500.0 377.9" stroke="#aaa" stroke-width="0.7" fill="none" />
<path d="M507.2 351.8L507.2 377.9" stroke="#aaa" stroke-width="0.7" fill="none" />
<path d="M514.5 351.8L514.5 377.9" stroke="#aaa" stroke-width="0.7" fill="none" />
<path d="M521.8 351.8L521.8 377.9" stroke="#aaa" stroke-width="0.7" fill="none" />
<path d="M529.0 351.8L529.0 377.9" stroke="#aaa" stroke-width="0.7" fill="none" />
<path d="M536.2 351.8L536.2 377.9" stroke="#aaa" stroke-width="0.7" fill="none" />
<path d="M543.5 351.8L543.5 377.9" stroke="#aaa" stroke-width="0.7" fill="none" />
<path d="M550.8 351.8L550.8 377.9" stroke="#aaa" stroke-width="0.7" fill="none" />
<path d="M558.0 351.8L558.0 377.9" stroke="#aaa" stroke-width="0.7" fill="none" />
<path d="M565.2 351.8L565.2 377.9" stroke="#aaa" stroke-width="0.7" fill="none" />
<path d="M572.5 351.8L572.5 377.9" stroke="#aaa" stroke-width="0.7" fill="none" />
<path d="M579.8 351.8L579.8 377.9" stroke="#aaa" stroke-width="0.7" fill="none" />
<path d="M587.0 351.8L587.0 377.9" stroke="#aaa" stroke-width="0.7" fill="none" />
<path d="M485.5 365.0L578.0 365.0" stroke="#bbb" stroke-width="0.6" fill="none" />
<path d="M576 362.3V367.7L579 365Z" stroke="#888" stroke-width="0.6" fill="none" />
<path d="M472.6 351.5L485.5 351.5" stroke="#bbb" stroke-width="0.6" fill="none" />
<path d="M472.6 352V378 M478.5 352V378" stroke="#bbb" stroke-width="0.6" fill="none" stroke-dasharray="1.5 1.8"/>
<rect x="136.6" y="280.6" width="26.8" height="8.8" fill="#fff" stroke="#8f8f8f" stroke-width=".8"/>
<path d="M136.6 283.6L163.4 283.6" stroke="#aaa" stroke-width="0.6" fill="none" />
<path d="M137.6 287.4L162.4 287.4" stroke="#aaa" stroke-width="0.7" fill="none" stroke-dasharray="1 1"/>
<rect x="322.0" y="280.6" width="26.8" height="8.8" fill="#fff" stroke="#8f8f8f" stroke-width=".8"/>
<path d="M322.0 283.6L348.8 283.6" stroke="#aaa" stroke-width="0.6" fill="none" />
<path d="M323.0 287.4L347.8 287.4" stroke="#aaa" stroke-width="0.7" fill="none" stroke-dasharray="1 1"/>
<rect x="398.6" y="280.6" width="26.8" height="8.8" fill="#fff" stroke="#8f8f8f" stroke-width=".8"/>
<path d="M398.6 283.6L425.4 283.6" stroke="#aaa" stroke-width="0.6" fill="none" />
<path d="M399.6 287.4L424.4 287.4" stroke="#aaa" stroke-width="0.7" fill="none" stroke-dasharray="1 1"/>
<rect x="498.4" y="280.6" width="26.8" height="8.8" fill="#fff" stroke="#8f8f8f" stroke-width=".8"/>
<path d="M498.4 283.6L525.2 283.6" stroke="#aaa" stroke-width="0.6" fill="none" />
<path d="M499.4 287.4L524.2 287.4" stroke="#aaa" stroke-width="0.7" fill="none" stroke-dasharray="1 1"/>
<rect x="60.7" y="612.4" width="98.3" height="4.2" fill="#fff" stroke="#aaa" stroke-width=".6"/>
<rect x="61.7" y="616.6" width="96.3" height="2.7" fill="#fff" stroke="#888" stroke-width=".7"/>
<path d="M60.7 614.5L159.0 614.5" stroke="#bbb" stroke-width="0.6" fill="none" />
<rect x="167.4" y="612.4" width="128.2" height="4.2" fill="#fff" stroke="#aaa" stroke-width=".6"/>
<rect x="168.4" y="616.6" width="126.2" height="2.7" fill="#fff" stroke="#888" stroke-width=".7"/>
<path d="M167.4 614.5L295.6 614.5" stroke="#bbb" stroke-width="0.6" fill="none" />
<rect x="356.7" y="612.4" width="115.0" height="4.2" fill="#fff" stroke="#aaa" stroke-width=".6"/>
<rect x="357.7" y="616.6" width="113.0" height="2.7" fill="#fff" stroke="#888" stroke-width=".7"/>
<path d="M356.7 614.5L471.7 614.5" stroke="#bbb" stroke-width="0.6" fill="none" />
<rect x="485.5" y="612.4" width="106.1" height="4.2" fill="#fff" stroke="#aaa" stroke-width=".6"/>
<rect x="486.5" y="616.6" width="104.1" height="2.7" fill="#fff" stroke="#888" stroke-width=".7"/>
<path d="M485.5 614.5L591.6 614.5" stroke="#bbb" stroke-width="0.6" fill="none" />
<rect x="299.6" y="612.6" width="53.1" height="3.4" fill="#fff" stroke="#aaa" stroke-width=".5"/>
<path d="M299.6 614.4L352.7 614.4" stroke="#aaa" stroke-width="0.8" fill="none" stroke-dasharray="1 1.5"/>
<path d="M300 612.6V589Q322 590 326 612.6Q329 591 352 588.5V612.6" stroke="#999" stroke-width="0.7" fill="none" />
<rect x="614.0" y="433.0" width="6.8" height="156.0" fill="#fff" stroke="#999" stroke-width=".6"/>
<path d="M616.0 433.0L616.0 589.0" stroke="#bbb" stroke-width="0.6" fill="none" />
<path d="M618.5 433.0L618.5 589.0" stroke="#bbb" stroke-width="0.6" fill="none" />
<path d="M614.0 484.0L620.8 484.0" stroke="#999" stroke-width="0.7" fill="none" />
<path d="M614.0 538.5L620.8 538.5" stroke="#999" stroke-width="0.7" fill="none" />
<rect x="31.2" y="433.0" width="5.2" height="156.0" fill="#fff" stroke="#aaa" stroke-width=".6"/>
<path d="M33.0 433.0L33.0 589.0" stroke="#ccc" stroke-width="0.6" fill="none" />
<rect x="31.2" y="484.0" width="5.2" height="4.4" fill="#ffffc2" />
<rect x="34.0" y="484.0" width="2.4" height="4.4" fill="#aed7ae" />
<path d="M31.2 538.5L36.4 538.5" stroke="#aaa" stroke-width="0.7" fill="none" />
<rect x="31.2" y="379.0" width="3.2" height="54.0" fill="#ffffc2" />
<rect x="34.4" y="379.0" width="2.0" height="54.0" fill="#aed7ae" />
<path d="M36.5 379.5H165.5V614H36.5Z" stroke="#111" stroke-width="0.95" fill="none" />
<path d="M36.5 415.5L165.5 415.5" stroke="#111" stroke-width="0.8" fill="none" />
<path d="M36.5 424.5L165.5 424.5" stroke="#222" stroke-width="0.8" fill="none" />
<path d="M36.5 463.5L165.5 463.5" stroke="#111" stroke-width="0.8" fill="none" />
<path d="M36.5 471.8L165.5 471.8" stroke="#555" stroke-width="0.8" fill="none" />
<path d="M36.5 510.5L165.5 510.5" stroke="#111" stroke-width="0.8" fill="none" />
<path d="M36.5 520.0L165.5 520.0" stroke="#555" stroke-width="0.8" fill="none" />
<path d="M36.5 558.6L165.5 558.6" stroke="#111" stroke-width="0.8" fill="none" />
<path d="M36.5 567.3L165.5 567.3" stroke="#222" stroke-width="0.8" fill="none" />
<path d="M36.5 424.5L165.5 379.5" stroke="#111" stroke-width="0.8" fill="none" />
<path d="M36.5 470.8L165.5 416.0" stroke="#111" stroke-width="0.8" fill="none" />
<path d="M36.5 520.0L165.5 463.5" stroke="#111" stroke-width="0.8" fill="none" />
<path d="M36.5 566.5L165.5 510.5" stroke="#111" stroke-width="0.8" fill="none" />
<path d="M36.5 614.0L165.5 558.6" stroke="#111" stroke-width="0.8" fill="none" />
<path d="M166.8 379.0L166.8 616.0" stroke="#e6e67a" stroke-width="1" fill="none" />
<g transform="translate(80.6 402.8) rotate(-19.5)"><rect x="-3.8" y="-5.2" width="7.6" height="10.4" fill="none" stroke="#f0f" stroke-width=".9"/><text x="0" y="3.4" font-family="Liberation Sans, sans-serif" font-size="9.2" text-anchor="middle" fill="#111">2</text><text x="7.6" y="3.5" font-family="Liberation Sans, sans-serif" font-size="9.3" fill="#111" textLength="31.2" lengthAdjust="spacingAndGlyphs">Q335 A</text></g>
<g transform="translate(80.2 446.3) rotate(-21.5)"><rect x="-3.8" y="-5.2" width="7.6" height="10.4" fill="none" stroke="#f0f" stroke-width=".9"/><text x="0" y="3.4" font-family="Liberation Sans, sans-serif" font-size="9.2" text-anchor="middle" fill="#111">1</text><text x="7.6" y="3.5" font-family="Liberation Sans, sans-serif" font-size="9.3" fill="#111" textLength="31.2" lengthAdjust="spacingAndGlyphs">Q335 A</text></g>
<g transform="translate(79.6 494) rotate(-21.5)"><rect x="-3.8" y="-5.2" width="7.6" height="10.4" fill="none" stroke="#f0f" stroke-width=".9"/><text x="0" y="3.4" font-family="Liberation Sans, sans-serif" font-size="9.2" text-anchor="middle" fill="#111">1</text><text x="7.6" y="3.5" font-family="Liberation Sans, sans-serif" font-size="9.3" fill="#111" textLength="31.2" lengthAdjust="spacingAndGlyphs">Q335 A</text></g>
<g transform="translate(79.6 541.6) rotate(-21.5)"><rect x="-3.8" y="-5.2" width="7.6" height="10.4" fill="none" stroke="#f0f" stroke-width=".9"/><text x="0" y="3.4" font-family="Liberation Sans, sans-serif" font-size="9.2" text-anchor="middle" fill="#111">1</text><text x="7.6" y="3.5" font-family="Liberation Sans, sans-serif" font-size="9.3" fill="#111" textLength="31.2" lengthAdjust="spacingAndGlyphs">Q335 A</text></g>
<g transform="translate(79.6 589.5) rotate(-21.5)"><rect x="-3.8" y="-5.2" width="7.6" height="10.4" fill="none" stroke="#f0f" stroke-width=".9"/><text x="0" y="3.4" font-family="Liberation Sans, sans-serif" font-size="9.2" text-anchor="middle" fill="#111">1</text><text x="7.6" y="3.5" font-family="Liberation Sans, sans-serif" font-size="9.3" fill="#111" textLength="31.2" lengthAdjust="spacingAndGlyphs">Q335 A</text></g>
<text x="85" y="341.0" font-family="Liberation Sans, sans-serif" font-size="3.6" fill="#c4c4c4">1.03</text>
<text x="85" y="345.4" font-family="Liberation Sans, sans-serif" font-size="3.6" fill="#c4c4c4">WC Damen</text>
<text x="85" y="349.8" font-family="Liberation Sans, sans-serif" font-size="3.6" fill="#c4c4c4">13.55 m²</text>
<text x="188" y="313.0" font-family="Liberation Sans, sans-serif" font-size="3.6" fill="#c4c4c4">1.05</text>
<text x="188" y="317.4" font-family="Liberation Sans, sans-serif" font-size="3.6" fill="#c4c4c4">WC Behinderte</text>
<text x="188" y="321.8" font-family="Liberation Sans, sans-serif" font-size="3.6" fill="#c4c4c4">4.62 m²</text>
<text x="189" y="355.0" font-family="Liberation Sans, sans-serif" font-size="3.6" fill="#c4c4c4">1.04</text>
<text x="189" y="359.4" font-family="Liberation Sans, sans-serif" font-size="3.6" fill="#c4c4c4">Flur WC</text>
<text x="189" y="363.8" font-family="Liberation Sans, sans-serif" font-size="3.6" fill="#c4c4c4">4.72 m²</text>
<text x="290" y="344.0" font-family="Liberation Sans, sans-serif" font-size="3.6" fill="#c4c4c4">1.07</text>
<text x="290" y="348.4" font-family="Liberation Sans, sans-serif" font-size="3.6" fill="#c4c4c4">WC Herren</text>
<text x="290" y="352.8" font-family="Liberation Sans, sans-serif" font-size="3.6" fill="#c4c4c4">11.76 m²</text>
<text x="327" y="312.0" font-family="Liberation Sans, sans-serif" font-size="3.6" fill="#c4c4c4">1.08</text>
<text x="327" y="316.4" font-family="Liberation Sans, sans-serif" font-size="3.6" fill="#c4c4c4">WC Personal</text>
<text x="327" y="320.8" font-family="Liberation Sans, sans-serif" font-size="3.6" fill="#c4c4c4">1.43 m²</text>
<text x="379" y="304.0" font-family="Liberation Sans, sans-serif" font-size="3.6" fill="#c4c4c4">1.06</text>
<text x="379" y="308.4" font-family="Liberation Sans, sans-serif" font-size="3.6" fill="#c4c4c4">Aufenthalt Perso</text>
<text x="379" y="312.8" font-family="Liberation Sans, sans-serif" font-size="3.6" fill="#c4c4c4">9.21 m²</text>
<text x="503" y="314.0" font-family="Liberation Sans, sans-serif" font-size="3.6" fill="#c4c4c4">1.10</text>
<text x="503" y="318.4" font-family="Liberation Sans, sans-serif" font-size="3.6" fill="#c4c4c4">Flur</text>
<text x="503" y="322.8" font-family="Liberation Sans, sans-serif" font-size="3.6" fill="#c4c4c4">18.41 m²</text>
<text x="406" y="438.0" font-family="Liberation Sans, sans-serif" font-size="3.6" fill="#c4c4c4">1.09</text>
<text x="406" y="442.4" font-family="Liberation Sans, sans-serif" font-size="3.6" fill="#c4c4c4">Küche</text>
<text x="406" y="446.8" font-family="Liberation Sans, sans-serif" font-size="3.6" fill="#c4c4c4">16.04 m²</text>
<text x="93" y="513.0" font-family="Liberation Sans, sans-serif" font-size="3.6" fill="#c4c4c4">1.02</text>
<text x="93" y="517.4" font-family="Liberation Sans, sans-serif" font-size="3.6" fill="#c4c4c4">Nebenraum</text>
<text x="93" y="521.8" font-family="Liberation Sans, sans-serif" font-size="3.6" fill="#c4c4c4">41.17 m²</text>
<text x="315" y="552.0" font-family="Liberation Sans, sans-serif" font-size="3.6" fill="#c4c4c4">1.01</text>
<text x="315" y="556.4" font-family="Liberation Sans, sans-serif" font-size="3.6" fill="#c4c4c4">Gastraum</text>
<text x="315" y="560.8" font-family="Liberation Sans, sans-serif" font-size="3.6" fill="#c4c4c4">61.12 m²</text>
<text x="517" y="513.0" font-family="Liberation Sans, sans-serif" font-size="3.6" fill="#c4c4c4">1.11</text>
<text x="517" y="517.4" font-family="Liberation Sans, sans-serif" font-size="3.6" fill="#c4c4c4">Stuberaum 1</text>
<text x="517" y="521.8" font-family="Liberation Sans, sans-serif" font-size="3.6" fill="#c4c4c4">26.51 m²</text>
<path d="M28.0 206.6L624.0 206.6" stroke="#9c9c9c" stroke-width="0.8" fill="none" />
<path d="M31.0 203.0L31.0 210.2" stroke="#9c9c9c" stroke-width="0.7" fill="none" />
<path d="M28.8 208.8L33.2 204.4" stroke="#9c9c9c" stroke-width="0.6" fill="none" />
<path d="M621.0 203.0L621.0 210.2" stroke="#9c9c9c" stroke-width="0.7" fill="none" />
<path d="M618.8 208.8L623.2 204.4" stroke="#9c9c9c" stroke-width="0.6" fill="none" />
<text x="326.0" y="204.0" font-family="Liberation Sans, sans-serif" font-size="5.4" fill="#b3b3b3" text-anchor="middle">22.24</text>
<path d="M28.0 225.6L624.0 225.6" stroke="#9c9c9c" stroke-width="0.8" fill="none" />
<path d="M31.0 222.0L31.0 229.2" stroke="#9c9c9c" stroke-width="0.7" fill="none" />
<path d="M28.8 227.8L33.2 223.4" stroke="#9c9c9c" stroke-width="0.6" fill="none" />
<path d="M38.2 222.0L38.2 229.2" stroke="#9c9c9c" stroke-width="0.7" fill="none" />
<path d="M36.0 227.8L40.4 223.4" stroke="#9c9c9c" stroke-width="0.6" fill="none" />
<path d="M70.0 222.0L70.0 229.2" stroke="#9c9c9c" stroke-width="0.7" fill="none" />
<path d="M67.8 227.8L72.2 223.4" stroke="#9c9c9c" stroke-width="0.6" fill="none" />
<path d="M71.3 222.0L71.3 229.2" stroke="#9c9c9c" stroke-width="0.7" fill="none" />
<path d="M69.1 227.8L73.5 223.4" stroke="#9c9c9c" stroke-width="0.6" fill="none" />
<path d="M101.8 222.0L101.8 229.2" stroke="#9c9c9c" stroke-width="0.7" fill="none" />
<path d="M99.6 227.8L104.0 223.4" stroke="#9c9c9c" stroke-width="0.6" fill="none" />
<path d="M103.2 222.0L103.2 229.2" stroke="#9c9c9c" stroke-width="0.7" fill="none" />
<path d="M101.0 227.8L105.4 223.4" stroke="#9c9c9c" stroke-width="0.6" fill="none" />
<path d="M133.7 222.0L133.7 229.2" stroke="#9c9c9c" stroke-width="0.7" fill="none" />
<path d="M131.5 227.8L135.9 223.4" stroke="#9c9c9c" stroke-width="0.6" fill="none" />
<path d="M135.0 222.0L135.0 229.2" stroke="#9c9c9c" stroke-width="0.7" fill="none" />
<path d="M132.8 227.8L137.2 223.4" stroke="#9c9c9c" stroke-width="0.6" fill="none" />
<path d="M163.8 222.0L163.8 229.2" stroke="#9c9c9c" stroke-width="0.7" fill="none" />
<path d="M161.6 227.8L166.0 223.4" stroke="#9c9c9c" stroke-width="0.6" fill="none" />
<path d="M166.8 222.0L166.8 229.2" stroke="#9c9c9c" stroke-width="0.7" fill="none" />
<path d="M164.6 227.8L169.0 223.4" stroke="#9c9c9c" stroke-width="0.6" fill="none" />
<path d="M243.4 222.0L243.4 229.2" stroke="#9c9c9c" stroke-width="0.7" fill="none" />
<path d="M241.2 227.8L245.6 223.4" stroke="#9c9c9c" stroke-width="0.6" fill="none" />
<path d="M246.4 222.0L246.4 229.2" stroke="#9c9c9c" stroke-width="0.7" fill="none" />
<path d="M244.2 227.8L248.6 223.4" stroke="#9c9c9c" stroke-width="0.6" fill="none" />
<path d="M286.2 222.0L286.2 229.2" stroke="#9c9c9c" stroke-width="0.7" fill="none" />
<path d="M284.0 227.8L288.4 223.4" stroke="#9c9c9c" stroke-width="0.6" fill="none" />
<path d="M287.5 222.0L287.5 229.2" stroke="#9c9c9c" stroke-width="0.7" fill="none" />
<path d="M285.3 227.8L289.7 223.4" stroke="#9c9c9c" stroke-width="0.6" fill="none" />
<path d="M319.4 222.0L319.4 229.2" stroke="#9c9c9c" stroke-width="0.7" fill="none" />
<path d="M317.2 227.8L321.6 223.4" stroke="#9c9c9c" stroke-width="0.6" fill="none" />
<path d="M320.7 222.0L320.7 229.2" stroke="#9c9c9c" stroke-width="0.7" fill="none" />
<path d="M318.5 227.8L322.9 223.4" stroke="#9c9c9c" stroke-width="0.6" fill="none" />
<path d="M352.5 222.0L352.5 229.2" stroke="#9c9c9c" stroke-width="0.7" fill="none" />
<path d="M350.3 227.8L354.7 223.4" stroke="#9c9c9c" stroke-width="0.6" fill="none" />
<path d="M355.6 222.0L355.6 229.2" stroke="#9c9c9c" stroke-width="0.7" fill="none" />
<path d="M353.4 227.8L357.8 223.4" stroke="#9c9c9c" stroke-width="0.6" fill="none" />
<path d="M429.1 222.0L429.1 229.2" stroke="#9c9c9c" stroke-width="0.7" fill="none" />
<path d="M426.9 227.8L431.3 223.4" stroke="#9c9c9c" stroke-width="0.6" fill="none" />
<path d="M432.1 222.0L432.1 229.2" stroke="#9c9c9c" stroke-width="0.7" fill="none" />
<path d="M429.9 227.8L434.3 223.4" stroke="#9c9c9c" stroke-width="0.6" fill="none" />
<path d="M613.9 222.0L613.9 229.2" stroke="#9c9c9c" stroke-width="0.7" fill="none" />
<path d="M611.7 227.8L616.1 223.4" stroke="#9c9c9c" stroke-width="0.6" fill="none" />
<path d="M621.0 222.0L621.0 229.2" stroke="#9c9c9c" stroke-width="0.7" fill="none" />
<path d="M618.8 227.8L623.2 223.4" stroke="#9c9c9c" stroke-width="0.6" fill="none" />
<text x="34.6" y="219.0" font-family="Liberation Sans, sans-serif" font-size="5.4" fill="#b3b3b3" text-anchor="middle">27</text>
<text x="54.1" y="223.0" font-family="Liberation Sans, sans-serif" font-size="5.4" fill="#b3b3b3" text-anchor="middle">1.20</text>
<text x="70.7" y="219.0" font-family="Liberation Sans, sans-serif" font-size="5.4" fill="#b3b3b3" text-anchor="middle">5</text>
<text x="86.6" y="223.0" font-family="Liberation Sans, sans-serif" font-size="5.4" fill="#b3b3b3" text-anchor="middle">1.15</text>
<text x="102.5" y="219.0" font-family="Liberation Sans, sans-serif" font-size="5.4" fill="#b3b3b3" text-anchor="middle">5</text>
<text x="118.4" y="223.0" font-family="Liberation Sans, sans-serif" font-size="5.4" fill="#b3b3b3" text-anchor="middle">1.15</text>
<text x="134.3" y="219.0" font-family="Liberation Sans, sans-serif" font-size="5.4" fill="#b3b3b3" text-anchor="middle">5</text>
<text x="149.4" y="223.0" font-family="Liberation Sans, sans-serif" font-size="5.4" fill="#b3b3b3" text-anchor="middle">1.08<tspan dy="-2" font-size="3.4">5</tspan></text>
<text x="165.3" y="219.0" font-family="Liberation Sans, sans-serif" font-size="5.4" fill="#b3b3b3" text-anchor="middle">11<tspan dy="-2" font-size="3.4">5</tspan></text>
<text x="205.1" y="223.0" font-family="Liberation Sans, sans-serif" font-size="5.4" fill="#b3b3b3" text-anchor="middle">2.88<tspan dy="-2" font-size="3.4">5</tspan></text>
<text x="244.9" y="219.0" font-family="Liberation Sans, sans-serif" font-size="5.4" fill="#b3b3b3" text-anchor="middle">11<tspan dy="-2" font-size="3.4">5</tspan></text>
<text x="266.3" y="223.0" font-family="Liberation Sans, sans-serif" font-size="5.4" fill="#b3b3b3" text-anchor="middle">1.50</text>
<text x="286.9" y="219.0" font-family="Liberation Sans, sans-serif" font-size="5.4" fill="#b3b3b3" text-anchor="middle">5</text>
<text x="303.5" y="223.0" font-family="Liberation Sans, sans-serif" font-size="5.4" fill="#b3b3b3" text-anchor="middle">1.20</text>
<text x="320.0" y="219.0" font-family="Liberation Sans, sans-serif" font-size="5.4" fill="#b3b3b3" text-anchor="middle">5</text>
<text x="336.6" y="223.0" font-family="Liberation Sans, sans-serif" font-size="5.4" fill="#b3b3b3" text-anchor="middle">1.20</text>
<text x="354.1" y="219.0" font-family="Liberation Sans, sans-serif" font-size="5.4" fill="#b3b3b3" text-anchor="middle">11<tspan dy="-2" font-size="3.4">5</tspan></text>
<text x="392.3" y="223.0" font-family="Liberation Sans, sans-serif" font-size="5.4" fill="#b3b3b3" text-anchor="middle">2.77</text>
<text x="430.6" y="219.0" font-family="Liberation Sans, sans-serif" font-size="5.4" fill="#b3b3b3" text-anchor="middle">11<tspan dy="-2" font-size="3.4">5</tspan></text>
<text x="523.0" y="223.0" font-family="Liberation Sans, sans-serif" font-size="5.4" fill="#b3b3b3" text-anchor="middle">6.85</text>
<text x="617.4" y="219.0" font-family="Liberation Sans, sans-serif" font-size="5.4" fill="#b3b3b3" text-anchor="middle">27</text>
<path d="M28.0 244.3L624.0 244.3" stroke="#9c9c9c" stroke-width="0.8" fill="none" />
<path d="M31.0 240.7L31.0 247.9" stroke="#9c9c9c" stroke-width="0.7" fill="none" />
<path d="M28.8 246.5L33.2 242.1" stroke="#9c9c9c" stroke-width="0.6" fill="none" />
<path d="M136.3 240.7L136.3 247.9" stroke="#9c9c9c" stroke-width="0.7" fill="none" />
<path d="M134.1 246.5L138.5 242.1" stroke="#9c9c9c" stroke-width="0.6" fill="none" />
<path d="M162.9 240.7L162.9 247.9" stroke="#9c9c9c" stroke-width="0.7" fill="none" />
<path d="M160.7 246.5L165.1 242.1" stroke="#9c9c9c" stroke-width="0.6" fill="none" />
<path d="M322.0 240.7L322.0 247.9" stroke="#9c9c9c" stroke-width="0.7" fill="none" />
<path d="M319.8 246.5L324.2 242.1" stroke="#9c9c9c" stroke-width="0.6" fill="none" />
<path d="M348.6 240.7L348.6 247.9" stroke="#9c9c9c" stroke-width="0.7" fill="none" />
<path d="M346.4 246.5L350.8 242.1" stroke="#9c9c9c" stroke-width="0.6" fill="none" />
<path d="M398.6 240.7L398.6 247.9" stroke="#9c9c9c" stroke-width="0.7" fill="none" />
<path d="M396.4 246.5L400.8 242.1" stroke="#9c9c9c" stroke-width="0.6" fill="none" />
<path d="M425.1 240.7L425.1 247.9" stroke="#9c9c9c" stroke-width="0.7" fill="none" />
<path d="M422.9 246.5L427.3 242.1" stroke="#9c9c9c" stroke-width="0.6" fill="none" />
<path d="M498.5 240.7L498.5 247.9" stroke="#9c9c9c" stroke-width="0.7" fill="none" />
<path d="M496.3 246.5L500.7 242.1" stroke="#9c9c9c" stroke-width="0.6" fill="none" />
<path d="M525.0 240.7L525.0 247.9" stroke="#9c9c9c" stroke-width="0.7" fill="none" />
<path d="M522.8 246.5L527.2 242.1" stroke="#9c9c9c" stroke-width="0.6" fill="none" />
<path d="M621.0 240.7L621.0 247.9" stroke="#9c9c9c" stroke-width="0.7" fill="none" />
<path d="M618.8 246.5L623.2 242.1" stroke="#9c9c9c" stroke-width="0.6" fill="none" />
<text x="83.7" y="241.7" font-family="Liberation Sans, sans-serif" font-size="5.4" fill="#b3b3b3" text-anchor="middle">3.97</text>
<text x="149.6" y="241.7" font-family="Liberation Sans, sans-serif" font-size="5.4" fill="#b3b3b3" text-anchor="middle">1.00</text>
<text x="242.4" y="241.7" font-family="Liberation Sans, sans-serif" font-size="5.4" fill="#b3b3b3" text-anchor="middle">6.00</text>
<text x="335.3" y="241.7" font-family="Liberation Sans, sans-serif" font-size="5.4" fill="#b3b3b3" text-anchor="middle">1.00</text>
<text x="373.6" y="241.7" font-family="Liberation Sans, sans-serif" font-size="5.4" fill="#b3b3b3" text-anchor="middle">1.88<tspan dy="-2" font-size="3.4">5</tspan></text>
<text x="411.8" y="241.7" font-family="Liberation Sans, sans-serif" font-size="5.4" fill="#b3b3b3" text-anchor="middle">1.00</text>
<text x="461.8" y="241.7" font-family="Liberation Sans, sans-serif" font-size="5.4" fill="#b3b3b3" text-anchor="middle">2.76<tspan dy="-2" font-size="3.4">5</tspan></text>
<text x="511.7" y="241.7" font-family="Liberation Sans, sans-serif" font-size="5.4" fill="#b3b3b3" text-anchor="middle">1.00</text>
<text x="573.0" y="241.7" font-family="Liberation Sans, sans-serif" font-size="5.4" fill="#b3b3b3" text-anchor="middle">3.62</text>
<text x="149.6" y="251.7" font-family="Liberation Sans, sans-serif" font-size="5.4" fill="#b3b3b3" text-anchor="middle">1.10</text>
<text x="335.3" y="251.7" font-family="Liberation Sans, sans-serif" font-size="5.4" fill="#b3b3b3" text-anchor="middle">1.10</text>
<text x="411.8" y="251.7" font-family="Liberation Sans, sans-serif" font-size="5.4" fill="#b3b3b3" text-anchor="middle">1.10</text>
<text x="511.7" y="251.7" font-family="Liberation Sans, sans-serif" font-size="5.4" fill="#b3b3b3" text-anchor="middle">1.10</text>
<path d="M28.0 658.4L624.0 658.4" stroke="#9c9c9c" stroke-width="0.8" fill="none" />
<path d="M31.0 654.8L31.0 662.0" stroke="#9c9c9c" stroke-width="0.7" fill="none" />
<path d="M28.8 660.6L33.2 656.2" stroke="#9c9c9c" stroke-width="0.6" fill="none" />
<path d="M60.7 654.8L60.7 662.0" stroke="#9c9c9c" stroke-width="0.7" fill="none" />
<path d="M58.5 660.6L62.9 656.2" stroke="#9c9c9c" stroke-width="0.6" fill="none" />
<path d="M158.9 654.8L158.9 662.0" stroke="#9c9c9c" stroke-width="0.7" fill="none" />
<path d="M156.7 660.6L161.1 656.2" stroke="#9c9c9c" stroke-width="0.6" fill="none" />
<path d="M167.4 654.8L167.4 662.0" stroke="#9c9c9c" stroke-width="0.7" fill="none" />
<path d="M165.2 660.6L169.6 656.2" stroke="#9c9c9c" stroke-width="0.6" fill="none" />
<path d="M295.6 654.8L295.6 662.0" stroke="#9c9c9c" stroke-width="0.7" fill="none" />
<path d="M293.4 660.6L297.8 656.2" stroke="#9c9c9c" stroke-width="0.6" fill="none" />
<path d="M299.6 654.8L299.6 662.0" stroke="#9c9c9c" stroke-width="0.7" fill="none" />
<path d="M297.4 660.6L301.8 656.2" stroke="#9c9c9c" stroke-width="0.6" fill="none" />
<path d="M352.7 654.8L352.7 662.0" stroke="#9c9c9c" stroke-width="0.7" fill="none" />
<path d="M350.5 660.6L354.9 656.2" stroke="#9c9c9c" stroke-width="0.6" fill="none" />
<path d="M356.7 654.8L356.7 662.0" stroke="#9c9c9c" stroke-width="0.7" fill="none" />
<path d="M354.5 660.6L358.9 656.2" stroke="#9c9c9c" stroke-width="0.6" fill="none" />
<path d="M471.7 654.8L471.7 662.0" stroke="#9c9c9c" stroke-width="0.7" fill="none" />
<path d="M469.5 660.6L473.9 656.2" stroke="#9c9c9c" stroke-width="0.6" fill="none" />
<path d="M485.5 654.8L485.5 662.0" stroke="#9c9c9c" stroke-width="0.7" fill="none" />
<path d="M483.3 660.6L487.7 656.2" stroke="#9c9c9c" stroke-width="0.6" fill="none" />
<path d="M591.6 654.8L591.6 662.0" stroke="#9c9c9c" stroke-width="0.7" fill="none" />
<path d="M589.4 660.6L593.8 656.2" stroke="#9c9c9c" stroke-width="0.6" fill="none" />
<path d="M621.0 654.8L621.0 662.0" stroke="#9c9c9c" stroke-width="0.7" fill="none" />
<path d="M618.8 660.6L623.2 656.2" stroke="#9c9c9c" stroke-width="0.6" fill="none" />
<text x="45.9" y="655.8" font-family="Liberation Sans, sans-serif" font-size="5.4" fill="#b3b3b3" text-anchor="middle">1.12</text>
<text x="109.8" y="655.8" font-family="Liberation Sans, sans-serif" font-size="5.4" fill="#b3b3b3" text-anchor="middle">3.70</text>
<text x="163.1" y="651.4" font-family="Liberation Sans, sans-serif" font-size="5.4" fill="#b3b3b3" text-anchor="middle">32</text>
<text x="231.5" y="655.8" font-family="Liberation Sans, sans-serif" font-size="5.4" fill="#b3b3b3" text-anchor="middle">4.83<tspan dy="-2" font-size="3.4">5</tspan></text>
<text x="297.6" y="651.4" font-family="Liberation Sans, sans-serif" font-size="5.4" fill="#b3b3b3" text-anchor="middle">15</text>
<text x="326.1" y="655.8" font-family="Liberation Sans, sans-serif" font-size="5.4" fill="#b3b3b3" text-anchor="middle">2.00</text>
<text x="354.7" y="651.4" font-family="Liberation Sans, sans-serif" font-size="5.4" fill="#b3b3b3" text-anchor="middle">15</text>
<text x="414.2" y="655.8" font-family="Liberation Sans, sans-serif" font-size="5.4" fill="#b3b3b3" text-anchor="middle">4.33<tspan dy="-2" font-size="3.4">5</tspan></text>
<text x="478.6" y="651.4" font-family="Liberation Sans, sans-serif" font-size="5.4" fill="#b3b3b3" text-anchor="middle">52</text>
<text x="538.5" y="655.8" font-family="Liberation Sans, sans-serif" font-size="5.4" fill="#b3b3b3" text-anchor="middle">4.00</text>
<text x="606.3" y="655.8" font-family="Liberation Sans, sans-serif" font-size="5.4" fill="#b3b3b3" text-anchor="middle">1.12</text>
<text x="109.8" y="665.8" font-family="Liberation Sans, sans-serif" font-size="5.4" fill="#b3b3b3" text-anchor="middle">2.95</text>
<text x="231.5" y="665.8" font-family="Liberation Sans, sans-serif" font-size="5.4" fill="#b3b3b3" text-anchor="middle">2.95</text>
<text x="326.1" y="665.8" font-family="Liberation Sans, sans-serif" font-size="5.4" fill="#b3b3b3" text-anchor="middle">3.00</text>
<text x="414.2" y="665.8" font-family="Liberation Sans, sans-serif" font-size="5.4" fill="#b3b3b3" text-anchor="middle">2.95</text>
<text x="538.5" y="665.8" font-family="Liberation Sans, sans-serif" font-size="5.4" fill="#b3b3b3" text-anchor="middle">2.95</text>
<path d="M28.0 677.0L624.0 677.0" stroke="#9c9c9c" stroke-width="0.8" fill="none" />
<path d="M31.0 673.4L31.0 680.6" stroke="#9c9c9c" stroke-width="0.7" fill="none" />
<path d="M28.8 679.2L33.2 674.8" stroke="#9c9c9c" stroke-width="0.6" fill="none" />
<path d="M38.2 673.4L38.2 680.6" stroke="#9c9c9c" stroke-width="0.7" fill="none" />
<path d="M36.0 679.2L40.4 674.8" stroke="#9c9c9c" stroke-width="0.6" fill="none" />
<path d="M352.5 673.4L352.5 680.6" stroke="#9c9c9c" stroke-width="0.7" fill="none" />
<path d="M350.3 679.2L354.7 674.8" stroke="#9c9c9c" stroke-width="0.6" fill="none" />
<path d="M356.5 673.4L356.5 680.6" stroke="#9c9c9c" stroke-width="0.7" fill="none" />
<path d="M354.3 679.2L358.7 674.8" stroke="#9c9c9c" stroke-width="0.6" fill="none" />
<path d="M613.9 673.4L613.9 680.6" stroke="#9c9c9c" stroke-width="0.7" fill="none" />
<path d="M611.7 679.2L616.1 674.8" stroke="#9c9c9c" stroke-width="0.6" fill="none" />
<path d="M621.0 673.4L621.0 680.6" stroke="#9c9c9c" stroke-width="0.7" fill="none" />
<path d="M618.8 679.2L623.2 674.8" stroke="#9c9c9c" stroke-width="0.6" fill="none" />
<text x="34.6" y="670.0" font-family="Liberation Sans, sans-serif" font-size="5.4" fill="#b3b3b3" text-anchor="middle">27</text>
<text x="195.4" y="674.0" font-family="Liberation Sans, sans-serif" font-size="5.4" fill="#b3b3b3" text-anchor="middle">11.85</text>
<text x="354.5" y="670.0" font-family="Liberation Sans, sans-serif" font-size="5.4" fill="#b3b3b3" text-anchor="middle">15</text>
<text x="485.2" y="674.0" font-family="Liberation Sans, sans-serif" font-size="5.4" fill="#b3b3b3" text-anchor="middle">9.70</text>
<text x="617.4" y="670.0" font-family="Liberation Sans, sans-serif" font-size="5.4" fill="#b3b3b3" text-anchor="middle">27</text>
<path d="M28.0 695.9L624.0 695.9" stroke="#9c9c9c" stroke-width="0.8" fill="none" />
<path d="M31.0 692.3L31.0 699.5" stroke="#9c9c9c" stroke-width="0.7" fill="none" />
<path d="M28.8 698.1L33.2 693.7" stroke="#9c9c9c" stroke-width="0.6" fill="none" />
<path d="M621.0 692.3L621.0 699.5" stroke="#9c9c9c" stroke-width="0.7" fill="none" />
<path d="M618.8 698.1L623.2 693.7" stroke="#9c9c9c" stroke-width="0.6" fill="none" />
<text x="326.0" y="692.9" font-family="Liberation Sans, sans-serif" font-size="5.4" fill="#b3b3b3" text-anchor="middle">22.24</text>
<rect x="295.6" y="91.0" width="61.2" height="18.6" fill="#e6eaf6" stroke="#b4bcd6" stroke-width="1"/>
<text x="326.2" y="104.1" font-family="Liberation Sans, sans-serif" font-size="9.7" fill="#5671ad" text-anchor="middle" textLength="49.5" lengthAdjust="spacingAndGlyphs">Grundriss:1</text>
<rect x="600.0" y="100.0" width="9.0" height="3.4" fill="#a2a2a2" />
<rect x="611.3" y="96.2" width="8.4" height="7.2" fill="#e8e8e8" stroke="#a2a2a2" stroke-width="1.5"/>
<path d="M623.6 97.2L629.8 103.2M629.8 97.2L623.6 103.2" stroke="#a49a9a" stroke-width="1.8" fill="none" />
<path d="M17 91.5h11.5l-11.5 11.5z" fill="#3c5f96"/><path d="M635 91.5h-11.5l11.5 11.5z" fill="#3c5f96"/><path d="M17 837.5h11.5l-11.5 -11.5z" fill="#3c5f96"/><path d="M635 837.5h-11.5l11.5 -11.5z" fill="#3c5f96"/>
<circle cx="29" cy="825.5" r="5.2" fill="#fff" stroke="#3a5c9c" stroke-width="1.2" stroke-dasharray="2 1.4"/><rect x="27.2" y="823.7" width="3.6" height="3.6" fill="#e04050" stroke="#b02030" stroke-width=".5"/>
</svg>
<svg id="heat1" style="left:0;top:0" width="1396" height="880" viewBox="0 0 1396 880">
<g shape-rendering="geometricPrecision">
<path d="M663.1 131.0L1184.1 131.0L1184.1 422.1L663.1 422.1Z" fill="#f0efb9" />
<path d="M663.1 131.0L1184.1 131.0L1184.1 188.4L1171.4 189.4L1151.3 186.4L1131.2 188.4L1101.0 191.8L1070.8 195.0L1040.6 197.0L1010.5 197.4L980.3 196.4L950.1 194.4L930.0 191.8L911.5 189.0L891.4 186.4L871.3 184.9L851.2 184.3L831.0 186.4L810.9 190.4L790.8 193.0L770.7 194.4L738.5 194.4L700.3 194.4L663.1 194.4Z" fill="#ffff00" />
<path d="M663.1 131.0L1184.1 131.0L1184.1 147.1L1179.4 155.2L1174.4 168.2L1167.4 175.3L1151.3 178.9L1131.2 182.3L1101.0 186.4L1070.8 189.8L1040.6 191.4L1010.5 191.8L980.3 190.4L950.1 188.4L930.0 186.4L911.5 183.7L891.4 181.3L871.3 179.7L851.2 179.3L831.0 181.3L808.9 185.3L786.8 188.4L762.6 189.4L738.5 189.0L716.4 187.4L700.3 186.4L672.5 185.3L671.1 172.3L668.1 161.2L663.1 158.2Z" fill="#deff64" />
<path d="M669.1 138.1L678.2 136.1L1010.5 135.1L1090.9 135.5L1151.3 137.1L1174.4 140.1L1171.4 151.1L1164.3 168.2L1151.3 173.3L1131.2 177.3L1101.0 181.3L1070.8 184.3L1040.6 186.4L1010.5 186.4L980.3 184.9L950.1 182.3L930.0 180.3L911.5 177.7L891.4 175.3L867.2 173.7L851.2 173.3L839.1 174.3L821.0 176.9L802.9 180.3L786.8 182.9L762.6 183.3L738.5 182.3L710.3 179.7L688.2 174.9L680.2 168.2L674.1 155.2L670.1 143.1Z" fill="#00ffff" />
<path d="M685.2 144.1L700.3 141.1L730.5 140.1L790.8 139.5L851.2 139.5L930.0 139.1L1010.5 139.5L1090.9 140.7L1131.2 142.1L1151.3 144.1L1154.9 149.1L1153.3 157.2L1143.2 165.2L1121.1 170.3L1090.9 175.3L1060.7 178.9L1030.6 180.9L1010.5 181.3L980.3 179.7L950.1 176.9L930.0 174.9L891.4 169.7L867.2 167.2L851.2 166.8L831.0 168.2L806.9 172.3L788.8 175.3L762.6 176.3L738.5 175.3L716.4 173.3L700.3 169.7L693.2 166.2L686.2 153.2Z" fill="#00ff00" />
<path d="M707.3 156.2L716.4 150.7L730.5 148.7L770.7 148.1L802.9 148.7L821.0 150.7L839.1 154.2L853.2 156.8L839.1 159.2L825.0 163.2L806.9 166.8L788.8 168.9L762.6 169.7L736.5 168.9L720.4 165.2Z" fill="#c8c434" />
<path d="M875.3 156.8L891.4 152.2L911.5 148.1L930.0 146.1L970.2 144.1L1010.5 144.1L1050.7 145.1L1090.9 148.1L1115.1 152.2L1127.1 156.2L1111.0 161.2L1090.9 165.2L1060.7 170.3L1030.6 173.7L1010.5 174.9L980.3 173.3L950.1 170.3L930.0 167.6L911.5 165.2L891.4 161.2Z" fill="#c8c434" />
<path d="M942.1 156.2L960.2 154.8L990.3 153.8L1030.6 153.8L1054.7 154.8L1071.8 156.2L1050.7 161.2L1030.6 165.2L1014.5 167.6L1000.4 167.6L980.3 165.2L960.2 160.2Z" fill="#ff00ff" />
<path d="M832.0 193.4L894.4 193.4L894.4 205.5L906.5 205.5L894.4 217.9L868.2 217.9L856.2 205.5L832.0 205.5Z" fill="#ffffff" />
<path d="M956.1 205.5L1053.1 205.5L1053.1 217.9L1040.6 217.9L1040.6 230.0L1028.6 230.0L1016.5 217.9L980.3 217.9L980.3 230.0L967.2 230.0L956.1 218.5Z" fill="#ffffff" />
<path d="M1124.1 205.5L1136.8 205.5L1124.1 217.9Z" fill="#ffffff" />
<path d="M956.1 278.1L967.2 289.2L967.2 301.2L979.9 313.3L979.9 349.5L967.2 349.5L967.2 373.7L956.1 373.7L956.1 349.5L943.7 337.5L943.7 326.4L956.1 326.4Z" fill="#ffffff" />
<path d="M1040.6 290.2L1053.1 290.2L1053.1 314.3L1064.4 326.4L1064.4 337.5L1053.1 337.5L1053.1 373.7L1040.6 373.7Z" fill="#ffffff" />
<path d="M990.3 265.0L994.4 258.0L1006.4 261.0L1016.5 266.4L1004.4 275.1L994.4 272.1Z" fill="#ffff00" />
<path d="M972.2 410.9L977.3 396.8L988.3 383.7L1002.4 377.7L1014.5 379.7L1026.6 388.7L1034.6 400.8L1037.6 412.9L1035.6 422.1L977.3 422.1Z" fill="#ffff00" />
<path d="M779.7 422.1L781.2 402.8L784.4 382.7L790.8 362.6L798.4 342.5L800.9 324.4L798.9 308.3L793.8 290.2L788.8 274.1L785.8 258.0L786.8 245.7L790.8 234.6L798.9 230.6L814.9 230.6L831.0 233.6L851.2 238.7L867.2 241.7L881.3 238.7L901.4 233.6L919.5 230.6L930.0 229.6L940.1 233.6L948.1 243.7L950.5 255.7L949.1 258.0L945.1 270.1L940.1 288.2L934.0 308.3L932.0 324.4L935.0 342.5L941.1 362.6L947.1 382.7L952.1 402.8L955.1 422.1Z" fill="#ffff00" />
<path d="M784.4 422.1L785.2 410.9L787.8 398.8L791.8 378.7L797.8 360.6L803.9 342.5L806.9 324.4L804.9 308.3L798.9 288.2L793.8 270.1L791.8 258.0L793.8 249.7L798.9 240.7L810.9 237.6L831.0 240.1L851.2 245.3L867.2 248.1L883.3 244.7L901.4 240.1L919.5 237.6L930.0 238.2L937.0 242.7L941.7 251.7L939.1 258.0L936.0 270.1L931.0 288.2L925.6 308.3L924.6 324.4L926.6 342.5L933.0 362.6L938.0 382.7L944.1 402.8L950.1 422.1Z" fill="#deff64" />
<path d="M788.8 422.1L789.8 410.9L793.2 398.8L797.8 378.7L803.9 360.6L809.9 342.5L812.5 324.4L810.9 310.3L803.9 288.2L798.9 268.1L797.8 258.0L797.8 255.7L802.9 245.7L817.0 243.7L831.0 245.7L851.2 251.7L867.2 254.7L883.3 250.7L901.4 246.1L919.5 243.7L930.0 247.7L934.0 253.7L934.4 258.0L932.0 270.1L930.0 278.1L923.6 298.2L919.5 314.3L918.5 324.4L920.5 342.5L927.6 362.6L933.0 382.7L939.1 402.8L945.1 422.1Z" fill="#00ffff" />
<path d="M792.4 422.1L793.8 412.9L797.8 400.8L802.9 382.7L808.9 362.6L814.9 342.5L818.0 324.4L815.9 310.3L808.9 288.2L803.9 268.1L802.9 258.0L806.9 250.7L821.0 248.7L835.1 251.3L851.2 256.8L867.2 260.2L883.3 255.7L901.4 251.7L917.5 250.1L930.0 258.0L925.6 270.1L919.5 290.2L914.5 310.3L913.1 324.4L915.5 342.5L922.6 362.6L929.6 382.7L934.0 402.8L940.1 422.1Z" fill="#00ff00" />
<path d="M857.2 422.1L867.2 417.3L877.3 422.1Z" fill="#00ffff" />
<path d="M796.8 422.1L797.8 410.9L801.9 400.8L807.9 382.7L813.9 362.6L821.0 342.5L824.6 326.4L821.0 312.3L812.9 294.2L807.9 278.1L808.9 265.0L814.9 256.8L827.0 255.7L839.1 258.8L851.2 263.8L867.2 266.8L883.3 261.8L899.4 258.2L911.5 257.8L921.6 264.0L924.6 276.1L919.5 292.2L911.5 310.3L907.5 324.4L910.5 342.5L917.5 362.6L924.6 382.7L930.0 398.8L932.0 406.9L935.0 422.1L887.4 422.1L877.3 415.9L867.2 412.5L857.2 415.9L848.1 422.1Z" fill="#c8c434" />
<path d="M798.9 411.3L802.9 404.8L808.9 394.8L815.9 374.7L823.0 354.6L829.0 338.5L832.0 324.4L827.0 308.3L821.0 292.2L818.0 278.1L819.0 268.1L827.0 265.0L839.1 267.1L851.2 273.1L867.2 277.1L881.3 272.1L897.4 266.0L908.5 265.0L912.5 276.1L909.5 290.2L903.4 306.3L898.4 324.4L901.4 338.5L909.5 354.6L917.5 374.7L924.6 394.8L930.0 406.9L931.6 414.9L932.0 418.3L917.5 420.1L901.4 417.3L883.3 410.3L867.2 405.8L851.2 410.3L835.1 416.9L819.0 420.1L805.9 417.9Z" fill="#ff00ff" />
<path d="M803.3 407.9L808.9 396.8L817.0 382.7L825.0 366.6L833.0 352.5L843.1 338.5L849.1 325.4L845.1 318.3L840.1 306.3L836.1 294.2L838.1 285.2L846.1 286.2L855.2 293.2L866.2 295.8L875.3 293.8L879.3 288.2L894.4 285.2L895.0 294.2L891.4 306.3L885.3 318.3L883.3 326.4L886.4 338.5L895.4 354.6L904.5 370.6L913.5 388.7L921.6 404.8L926.6 413.9L917.5 416.9L901.4 412.9L883.3 403.8L867.2 396.8L851.2 401.8L835.1 409.9L819.0 415.9L805.9 413.9Z" fill="#ff8000" />
<path d="M841.1 359.6L851.2 358.6L863.2 361.6L869.3 360.2L877.3 356.2L887.4 358.6L896.4 366.6L904.5 378.7L911.5 392.8L913.9 404.8L911.5 410.9L901.4 408.9L885.3 400.8L877.3 386.7L870.3 376.7L866.2 373.7L859.2 376.7L854.2 382.7L851.2 394.8L839.1 402.8L827.0 407.9L818.0 408.9L818.0 398.8L821.0 386.7L828.0 376.7L835.1 366.6Z" fill="#c89632" />
<path d="M1054.3 422.1L1055.7 412.9L1059.7 396.8L1065.2 378.7L1070.8 360.6L1076.4 342.5L1078.9 326.4L1076.8 310.3L1070.8 292.2L1064.8 274.1L1060.7 258.0L1060.7 249.7L1063.8 239.7L1070.8 233.6L1086.9 232.6L1105.0 235.6L1123.1 239.7L1141.2 234.6L1161.3 225.6L1184.1 218.5L1184.1 422.1Z" fill="#ffff00" />
<path d="M1061.8 422.1L1063.8 410.9L1067.8 396.8L1073.2 378.7L1078.9 360.6L1083.9 342.5L1085.9 326.4L1083.9 310.3L1078.9 292.2L1073.2 270.1L1070.8 258.0L1069.8 253.7L1073.8 245.7L1082.9 241.7L1097.0 241.3L1111.0 244.7L1125.1 247.7L1141.2 243.7L1161.3 235.2L1184.1 226.6L1184.1 312.3L1180.4 318.3L1179.4 326.4L1180.4 336.4L1184.1 342.5L1184.1 422.1Z" fill="#deff64" />
<path d="M1066.8 422.1L1068.8 410.9L1073.8 396.8L1079.9 378.7L1085.9 360.6L1090.9 342.5L1092.9 326.4L1090.9 310.3L1085.9 292.2L1079.9 270.1L1076.8 258.0L1075.8 255.7L1079.9 248.7L1088.9 245.7L1101.0 246.7L1115.1 250.7L1126.1 253.7L1141.2 249.7L1161.3 240.7L1184.1 232.6L1184.1 301.2L1178.4 314.3L1173.4 326.4L1175.4 338.5L1181.4 348.5L1184.1 352.5L1184.1 422.1Z" fill="#00ffff" />
<path d="M1120.1 422.1L1126.1 417.3L1133.2 422.1Z" fill="#deff64" />
<path d="M1070.8 412.9L1073.8 408.9L1080.9 396.8L1087.9 378.7L1094.9 360.6L1101.0 342.5L1103.4 326.4L1099.0 306.3L1092.9 288.2L1086.9 270.1L1083.9 258.0L1083.9 259.8L1087.9 254.7L1097.0 253.7L1111.0 256.8L1126.1 261.8L1141.2 256.8L1157.3 247.7L1171.4 240.7L1184.1 238.7L1184.1 284.1L1178.4 298.2L1170.4 314.3L1164.3 326.4L1167.4 338.5L1174.4 350.5L1181.4 360.6L1184.1 364.6L1184.1 422.1L1145.2 422.1L1137.2 414.9L1126.1 411.9L1117.1 413.9L1107.0 422.1L1090.9 422.1L1075.8 418.9Z" fill="#00ff00" />
<path d="M1075.8 408.9L1084.9 398.8L1092.9 384.7L1101.0 368.6L1109.0 352.5L1116.1 338.5L1119.1 326.4L1117.1 318.3L1109.0 304.3L1101.0 288.2L1097.0 274.9L1101.0 266.9L1111.0 268.9L1125.1 280.9L1135.2 274.9L1151.3 263.8L1165.3 253.7L1173.4 249.3L1177.0 255.7L1176.4 269.9L1174.4 282.1L1167.4 298.2L1155.3 314.3L1149.3 326.4L1151.3 338.5L1159.3 350.5L1171.4 364.6L1179.4 378.7L1184.1 388.7L1184.1 422.1L1157.3 422.1L1151.3 416.9L1143.2 408.9L1135.2 403.8L1126.1 402.8L1119.1 405.8L1107.0 412.9L1090.9 416.9L1078.9 413.9Z" fill="#c8c434" />
<path d="M1113.0 369.6L1118.1 373.7L1119.1 380.7L1120.1 386.7L1117.1 392.8L1115.1 398.8L1107.0 407.9L1101.0 410.9L1087.9 409.9L1089.9 398.8L1095.9 386.7L1101.0 377.7L1109.0 372.7Z" fill="#ff00ff" />
<path d="M1148.2 361.0L1157.3 363.6L1166.4 370.6L1174.4 380.7L1180.4 394.8L1184.1 402.8L1184.1 419.9L1171.4 416.9L1159.3 410.9L1149.3 402.8L1141.2 388.7L1138.2 376.7L1140.2 366.6Z" fill="#ff00ff" />
<path d="M1161.3 386.7L1171.4 393.8L1176.4 402.8L1177.0 411.9L1169.4 412.9L1160.3 406.9L1156.3 394.8Z" fill="#ff8000" />
<path d="M663.1 205.5L770.7 205.5L781.8 216.5L781.8 422.1L663.1 422.1Z" fill="#ffffff" />
</g></svg>
<svg id="heat2" style="left:0;top:0" width="1396" height="880" viewBox="0 0 1396 880">
<g>
<path d="M663.1 505.0L1184.1 505.0L1184.1 794.9L663.1 794.9Z" fill="#f0efb9" />
<path d="M663.1 505.0L686.2 505.0L710.3 508.1L734.5 509.1L754.6 512.1L790.8 511.5L821.0 513.1L839.1 521.1L855.2 529.2L839.1 533.2L821.0 542.3L794.8 556.3L770.7 558.4L736.5 559.4L716.4 563.4L694.3 569.4L678.2 575.4L663.1 575.4Z" fill="#ffff00" />
<path d="M663.1 505.0L686.2 505.0L704.3 513.1L711.4 523.1L709.3 533.2L698.3 551.3L675.1 562.4L670.1 554.3L673.1 536.2L663.1 520.1Z" fill="#deff64" />
<path d="M870.3 529.2L891.4 517.1L911.5 511.1L930.0 508.1L960.2 509.1L1000.4 514.1L1030.6 512.1L1070.8 509.1L1111.0 506.7L1131.2 505.0L1184.1 505.0L1184.1 569.4L1171.4 569.4L1151.3 561.4L1137.2 552.3L1123.1 545.3L1101.0 544.9L1080.9 550.3L1050.7 556.3L1020.5 557.3L990.3 558.4L950.1 558.4L942.1 555.3L930.0 547.3L911.5 542.3L891.4 536.2Z" fill="#ffff00" />
<path d="M1149.3 518.1L1165.3 510.1L1179.4 506.1L1184.1 509.1L1181.4 519.1L1174.4 529.2L1161.3 535.2L1153.3 527.2Z" fill="#deff64" />
<path d="M1168.4 554.3L1173.4 549.3L1172.4 556.3Z" fill="#deff64" />
<path d="M832.0 567.0L894.4 567.0L894.4 579.5L832.0 579.5Z" fill="#ffffff" />
<path d="M993.4 591.5L1005.4 579.5L1016.9 579.5L1016.9 591.5Z" fill="#ffffff" />
<path d="M956.1 591.5L967.8 591.5L967.8 602.6Z" fill="#ffffff" />
<path d="M1028.6 591.9L1053.1 591.9L1053.1 603.6L1040.6 603.6Z" fill="#ffffff" />
<path d="M956.1 651.5L967.8 651.5L967.8 746.7L956.1 746.7L956.1 723.5L943.7 711.5L943.7 700.0L956.1 700.0Z" fill="#ffffff" />
<path d="M1040.6 651.5L1053.1 651.5L1053.1 677.3L1064.4 688.3L1064.4 711.5L1053.1 711.5L1053.1 759.7L1040.6 748.7Z" fill="#ffffff" />
<path d="M988.3 637.8L990.3 625.7L998.4 618.7L1004.4 617.3L1012.5 620.1L1019.5 627.7L1021.5 641.8L1021.5 630.0L1022.1 650.1L1020.5 670.2L1018.5 696.4L1021.5 720.5L1024.5 742.6L1026.6 762.8L1027.6 780.9L1024.5 794.9L988.3 794.9L983.9 780.9L984.3 762.8L987.3 742.6L992.4 720.5L995.4 696.4L992.4 670.2L988.3 650.1L988.7 630.0Z" fill="#ffff00" />
<path d="M1005.4 716.5L1010.5 734.6L1012.5 750.7L1010.5 766.8L1004.4 773.8L1000.4 766.8L999.4 750.7L1001.4 734.6Z" fill="#deff64" />
<path d="M1004.4 656.1L1006.4 680.3L1005.2 710.5L1003.6 680.3Z" fill="#deff64" />
<path d="M792.4 637.8L791.2 617.7L794.8 605.6L799.9 597.6L810.9 595.6L831.0 595.6L851.2 598.6L867.2 601.6L883.3 598.6L911.5 595.6L930.0 596.6L930.0 597.0L936.0 605.6L939.7 617.7L939.1 637.8L939.1 630.0L937.0 650.1L933.0 670.2L931.0 696.4L932.4 720.5L936.0 742.6L941.1 762.8L945.1 780.9L949.1 794.9L780.7 794.9L783.8 780.9L790.8 760.7L795.8 740.6L798.9 720.5L800.5 696.4L797.8 670.2L794.8 650.1Z" fill="#ffff00" />
<path d="M798.9 637.8L798.4 621.7L801.9 609.6L808.9 602.6L821.0 601.6L841.1 603.6L867.2 607.2L891.4 603.6L911.5 601.6L930.0 604.6L930.0 609.6L932.4 619.7L931.6 637.8L931.6 638.0L930.0 650.1L928.6 670.2L925.2 696.4L927.6 720.5L931.6 742.6L936.0 762.8L940.1 780.9L943.1 794.9L790.8 794.9L793.2 780.9L798.9 760.7L803.3 740.6L806.5 720.5L807.9 696.4L805.3 670.2L801.9 650.1Z" fill="#deff64" />
<path d="M804.5 637.8L804.9 621.7L808.9 612.7L817.0 607.6L831.0 607.2L851.2 610.7L867.2 613.7L887.4 609.6L911.5 607.2L921.6 609.6L926.6 619.7L927.2 637.8L926.6 650.1L923.6 670.2L920.5 696.4L923.2 720.5L927.6 742.6L931.0 762.8L934.4 780.9L937.0 794.9L796.4 794.9L799.3 780.9L804.5 760.7L808.5 740.6L811.3 720.5L812.5 696.4L809.9 670.2L806.9 650.1Z" fill="#00ffff" />
<path d="M808.9 637.8L809.9 623.7L813.9 615.7L823.0 611.7L837.1 612.7L851.2 615.7L867.2 618.7L883.3 615.7L903.4 612.1L915.5 613.7L920.5 621.7L921.6 637.8L921.2 650.1L919.1 670.2L916.5 696.4L919.1 720.5L923.6 742.6L928.6 762.8L930.0 776.8L932.0 794.9L879.3 794.9L867.2 791.5L855.2 794.9L801.9 794.9L803.9 780.9L808.9 760.7L812.9 740.6L815.3 720.5L816.6 696.4L813.9 670.2L811.3 650.1Z" fill="#00ff00" />
<path d="M812.9 637.8L814.5 627.7L819.0 620.7L827.0 617.7L841.1 617.7L855.2 621.3L867.2 623.7L881.3 620.7L899.4 617.3L909.5 618.7L914.5 625.7L915.9 641.8L915.9 650.1L914.5 670.2L912.5 696.4L915.1 720.5L919.5 742.6L924.0 762.8L927.6 780.9L929.6 794.9L891.4 794.9L879.3 790.9L867.2 788.5L855.2 790.9L843.1 794.9L805.9 794.9L808.9 780.9L813.3 760.7L817.0 740.6L819.4 720.5L820.6 696.4L818.0 670.2L815.3 650.1Z" fill="#c8c434" />
<path d="M818.6 641.8L821.0 631.8L827.0 625.7L837.1 623.7L851.2 625.7L867.2 628.8L881.3 625.7L895.4 623.3L904.5 624.7L909.1 630.8L910.5 645.9L910.5 650.1L909.9 670.2L908.5 696.4L911.1 720.5L915.1 742.6L919.1 762.8L921.6 780.9L919.5 786.9L911.5 788.9L899.4 785.9L883.3 780.9L867.2 776.8L851.2 780.9L835.1 785.9L819.0 789.9L810.9 785.9L812.5 778.9L817.0 760.7L820.0 740.6L822.0 720.5L823.0 696.4L821.0 670.2L820.0 650.1Z" fill="#ff00ff" />
<path d="M823.4 643.8L826.6 635.8L833.0 631.4L843.1 630.2L855.2 632.8L867.2 635.8L881.3 632.2L893.4 629.8L900.4 632.2L904.5 637.8L905.9 653.9L906.5 670.2L905.1 696.4L907.5 720.5L911.5 742.6L915.1 762.8L916.5 778.9L911.5 783.9L899.4 780.9L883.3 775.8L867.2 771.8L851.2 775.8L835.1 780.9L821.0 784.5L817.4 778.9L820.6 760.7L823.4 740.6L826.0 720.5L827.0 696.4L825.4 670.2L824.6 650.1Z" fill="#ff8000" />
<path d="M830.4 646.1L834.1 640.5L841.1 638.4L851.2 639.7L867.2 642.5L881.3 638.4L891.4 637.0L898.4 640.5L901.4 650.1L903.0 670.2L901.4 696.4L903.9 720.5L907.5 742.6L909.5 760.7L908.5 770.8L899.4 773.8L883.3 769.8L867.2 765.8L851.2 769.8L837.1 773.8L828.0 770.8L827.0 758.7L829.4 740.6L832.0 720.5L833.0 696.4L831.6 670.2Z" fill="#c89632" />
<path d="M834.1 652.1L839.1 649.1L853.2 648.5L867.2 650.1L879.3 647.1L891.4 648.1L896.4 654.1L897.8 670.2L896.4 696.4L898.4 720.5L901.0 742.6L899.4 756.7L891.4 762.8L879.3 760.7L867.2 757.7L853.2 760.7L841.1 763.8L832.0 758.7L830.6 742.6L833.0 720.5L836.1 696.4L834.7 670.2Z" fill="#c86432" />
<path d="M841.1 663.2L849.1 660.2L867.2 659.8L881.3 659.2L888.4 663.2L891.0 680.3L890.4 696.4L891.4 720.5L893.4 742.6L890.4 750.7L879.3 751.7L867.2 748.7L853.2 750.7L842.1 748.7L839.1 738.6L840.1 720.5L842.1 696.4L840.7 680.3Z" fill="#966432" />
<path d="M849.1 677.3L855.2 673.2L867.2 671.8L879.3 673.9L882.9 678.3L884.3 696.4L884.9 718.5L883.3 734.6L873.3 738.6L861.2 737.6L851.2 732.6L846.1 724.5L848.1 710.5L848.7 690.3Z" fill="#7d1ebe" />
<path d="M1070.4 627.7L1071.8 611.7L1076.8 601.6L1086.9 597.6L1101.0 597.2L1121.1 600.6L1141.2 597.6L1161.3 590.5L1175.4 584.5L1184.1 583.1L1184.1 794.9L1058.7 794.9L1064.8 780.9L1070.8 762.8L1075.8 742.6L1078.9 720.5L1080.5 696.4L1077.8 670.2L1074.8 650.1L1071.8 630.0Z" fill="#ffff00" />
<path d="M1079.9 657.9L1078.4 637.8L1078.9 621.7L1082.9 610.7L1090.9 605.6L1105.0 605.6L1121.1 608.6L1141.2 604.6L1161.3 597.6L1175.4 593.6L1184.1 593.1L1184.1 794.9L1073.8 794.9L1076.4 780.9L1080.5 762.8L1083.9 742.6L1086.5 720.5L1087.3 696.4L1084.5 670.2L1081.9 650.1L1079.9 630.0Z" fill="#deff64" />
<path d="M1084.5 657.9L1082.9 637.8L1083.9 625.7L1087.9 616.7L1094.9 610.7L1107.0 610.7L1121.1 613.7L1137.2 611.3L1155.3 603.6L1171.4 597.0L1184.1 599.6L1184.1 794.9L1145.2 794.9L1135.2 790.9L1123.1 790.9L1112.0 794.9L1077.8 794.9L1080.9 780.9L1084.9 762.8L1087.9 742.6L1089.9 720.5L1090.5 696.4L1087.9 670.2L1085.3 650.1L1083.9 630.0Z" fill="#00ffff" />
<path d="M1090.9 674.0L1088.9 657.9L1087.9 637.8L1088.9 627.7L1092.9 620.7L1101.0 616.1L1111.0 616.1L1123.1 618.7L1139.2 615.7L1155.3 608.6L1171.4 601.6L1179.4 605.6L1184.1 611.7L1184.1 630.0L1183.0 670.2L1181.4 696.4L1182.4 720.5L1184.1 734.6L1184.1 794.9L1171.4 794.9L1151.3 789.9L1135.2 784.9L1123.1 784.9L1111.0 790.9L1103.0 793.9L1090.9 794.5L1083.9 792.9L1085.9 780.9L1089.3 762.8L1091.9 742.6L1093.3 720.5L1093.9 696.4L1091.9 670.2L1089.9 650.1L1088.5 630.0Z" fill="#00ff00" />
<path d="M1093.9 674.0L1092.5 657.9L1092.5 641.8L1093.9 631.8L1098.0 625.7L1105.0 621.7L1115.1 621.3L1127.1 623.7L1141.2 620.1L1157.3 612.7L1172.4 606.6L1178.4 613.7L1181.4 629.8L1182.4 649.9L1181.4 674.0L1179.4 696.4L1179.0 720.5L1182.4 742.6L1184.1 754.7L1184.1 794.9L1177.4 794.9L1167.4 790.9L1151.3 784.9L1135.2 779.9L1123.1 779.9L1111.0 785.9L1101.0 789.9L1090.9 789.9L1087.3 784.9L1088.9 780.9L1092.5 762.8L1094.9 742.6L1096.6 720.5L1097.0 696.4L1094.9 670.2L1093.3 650.1L1092.5 630.0Z" fill="#c8c434" />
<path d="M1097.4 674.0L1096.6 657.9L1097.0 645.9L1100.0 637.8L1106.0 632.8L1117.1 631.4L1129.1 631.8L1143.2 625.7L1157.3 617.7L1171.4 612.1L1176.4 617.7L1179.4 633.8L1180.4 653.9L1178.4 674.0L1177.0 696.4L1176.4 720.5L1179.4 742.6L1183.0 762.8L1184.1 774.8L1184.1 792.9L1179.4 793.9L1167.4 787.9L1151.3 778.9L1135.2 771.8L1123.1 770.8L1113.0 775.8L1102.0 783.9L1095.3 771.8L1096.6 762.8L1098.6 742.6L1100.6 720.5L1101.4 696.4L1100.0 670.2L1098.6 650.1Z" fill="#ff00ff" />
<path d="M1101.0 674.0L1100.6 657.9L1102.0 647.9L1107.0 640.8L1117.1 637.8L1131.2 635.8L1145.2 630.8L1159.3 624.7L1170.4 621.7L1174.4 627.7L1177.0 643.8L1177.4 661.9L1175.8 674.0L1174.4 696.4L1173.8 720.5L1176.4 742.6L1180.4 762.8L1182.4 782.9L1179.4 788.9L1167.4 782.9L1151.3 773.8L1135.2 766.8L1123.1 765.8L1113.0 770.8L1104.0 768.8L1100.6 758.7L1102.0 742.6L1104.0 720.5L1105.0 696.4L1103.4 670.2L1102.0 650.1Z" fill="#ff8000" />
<path d="M1107.0 674.0L1108.0 661.9L1111.0 653.9L1119.1 646.9L1131.2 642.8L1143.2 637.8L1155.3 632.8L1166.4 629.8L1171.0 635.8L1173.0 649.9L1173.0 666.0L1171.4 674.0L1171.4 696.4L1170.4 720.5L1172.4 742.6L1176.4 762.8L1178.4 774.8L1173.4 778.9L1159.3 771.8L1143.2 763.8L1127.1 758.7L1115.1 760.7L1109.0 758.7L1108.6 742.6L1110.0 720.5L1111.0 696.4L1110.0 670.2L1108.0 650.1Z" fill="#c89632" />
<path d="M1118.1 664.0L1126.1 655.9L1137.2 647.9L1147.2 641.9L1157.3 640.9L1163.3 646.9L1165.7 660.0L1165.3 674.1L1166.4 696.4L1164.3 720.5L1166.4 742.6L1169.0 758.7L1166.4 766.8L1155.3 760.7L1139.2 752.7L1123.1 744.7L1112.0 734.6L1111.0 720.5L1112.0 696.4L1113.0 680.3L1115.1 670.2Z" fill="#c86432" />
<path d="M1121.1 674.1L1128.1 667.0L1139.2 660.0L1148.2 654.9L1154.3 658.0L1158.3 666.0L1159.3 674.1L1158.9 696.4L1157.3 720.5L1159.3 738.6L1158.3 750.7L1151.3 752.7L1139.2 744.7L1126.1 736.6L1119.1 726.6L1118.1 710.5L1119.1 690.3Z" fill="#966432" />
<path d="M1149.3 676.3L1141.2 678.3L1133.2 684.3L1128.1 696.4L1127.1 710.5L1131.2 720.5L1139.2 728.6L1146.2 732.6L1149.3 730.6L1149.7 710.5L1149.3 690.3Z" fill="#7d1ebe" />
<path d="M663.1 579.5L770.7 579.5L781.8 590.5L781.8 794.9L663.1 794.9Z" fill="#ffffff" />
</g></svg>
<svg id="vp23" style="left:0;top:0" width="1396" height="880" viewBox="0 0 1396 880">
<rect x="654.6" y="122.3" width="539.0" height="3.1" fill="#ffffc2" />
<rect x="1190.5" y="122.3" width="3.1" height="137.7" fill="#ffffc2" />
<rect x="1190.5" y="402.5" width="3.1" height="27.7" fill="#ffffc2" />
<rect x="654.6" y="122.3" width="3.1" height="307.8" fill="#ffffc2" />
<rect x="654.6" y="427.1" width="27.4" height="3.0" fill="#ffffc2" />
<rect x="1166.7" y="427.1" width="26.9" height="3.0" fill="#ffffc2" />
<rect x="771.5" y="427.1" width="7.7" height="3.0" fill="#ffffc2" />
<rect x="657.7" y="125.4" width="532.8" height="3.6" fill="#aed7ae" />
<rect x="1187.1" y="125.4" width="3.4" height="134.6" fill="#aed7ae" />
<rect x="1187.1" y="402.5" width="3.4" height="24.8" fill="#aed7ae" />
<rect x="657.7" y="125.4" width="3.5" height="134.6" fill="#aed7ae" />
<rect x="657.7" y="402.5" width="3.5" height="24.7" fill="#aed7ae" />
<rect x="657.7" y="423.8" width="24.3" height="3.5" fill="#aed7ae" />
<rect x="1166.7" y="423.8" width="23.8" height="3.5" fill="#aed7ae" />
<rect x="771.5" y="423.8" width="7.7" height="3.5" fill="#aed7ae" />
<rect x="896.3" y="423.8" width="3.7" height="3.5" fill="#aed7ae" />
<rect x="948.5" y="423.8" width="3.7" height="3.5" fill="#aed7ae" />
<rect x="1057.2" y="423.8" width="12.6" height="3.5" fill="#aed7ae" />
<path d="M654.6 122.3H1193.6V430.1H654.6Z" stroke="#b9b9a0" stroke-width="0.7" fill="none" />
<path d="M657.8 210.6V125.4H1190.3V260.0" stroke="#4d5a3a" stroke-width="0.8" fill="none" />
<path d="M1190.3 402.5L1190.3 427.3" stroke="#333" stroke-width="0.9" fill="none" />
<path d="M777.5 427.5L1190.3 427.5" stroke="#3a3a3a" stroke-width="0.9" fill="none" />
<path d="M691.1 129.0L691.1 130.7" stroke="#aaa" stroke-width="1.2" fill="none" />
<path d="M720.4 129.0L720.4 130.7" stroke="#aaa" stroke-width="1.2" fill="none" />
<path d="M748.7 129.0L748.7 130.7" stroke="#aaa" stroke-width="1.2" fill="none" />
<path d="M777.3 129.0L777.3 130.7" stroke="#e99" stroke-width="1.2" fill="none" />
<path d="M850.1 129.0L850.1 130.7" stroke="#e99" stroke-width="1.2" fill="none" />
<path d="M888.5 129.0L888.5 130.7" stroke="#aaa" stroke-width="1.2" fill="none" />
<path d="M918.6 129.0L918.6 130.7" stroke="#aaa" stroke-width="1.2" fill="none" />
<path d="M949.7 129.0L949.7 130.7" stroke="#e99" stroke-width="1.2" fill="none" />
<path d="M1019.6 129.0L1019.6 130.7" stroke="#e99" stroke-width="1.2" fill="none" />
<rect x="751.1" y="120.7" width="24.5" height="8.0" fill="#fff" stroke="#8f8f8f" stroke-width=".8"/>
<path d="M751.1 123.5L775.5 123.5" stroke="#aaa" stroke-width="0.6" fill="none" />
<rect x="920.4" y="120.7" width="24.5" height="8.0" fill="#fff" stroke="#8f8f8f" stroke-width=".8"/>
<path d="M920.4 123.5L944.9 123.5" stroke="#aaa" stroke-width="0.6" fill="none" />
<rect x="990.4" y="120.7" width="24.5" height="8.0" fill="#fff" stroke="#8f8f8f" stroke-width=".8"/>
<path d="M990.4 123.5L1014.9 123.5" stroke="#aaa" stroke-width="0.6" fill="none" />
<rect x="1081.6" y="120.7" width="24.5" height="8.0" fill="#fff" stroke="#8f8f8f" stroke-width=".8"/>
<path d="M1081.6 123.5L1106.1 123.5" stroke="#aaa" stroke-width="0.6" fill="none" />
<rect x="681.7" y="423.8" width="89.8" height="3.8" fill="#fff" stroke="#aaa" stroke-width=".6"/>
<rect x="682.6" y="427.7" width="88.0" height="2.7" fill="#fff" stroke="#888" stroke-width=".7"/>
<path d="M681.7 425.8L771.5 425.8" stroke="#bbb" stroke-width="0.6" fill="none" />
<rect x="779.2" y="423.8" width="117.1" height="3.8" fill="#fff" stroke="#aaa" stroke-width=".6"/>
<rect x="780.1" y="427.7" width="115.3" height="2.7" fill="#fff" stroke="#888" stroke-width=".7"/>
<path d="M779.2 425.8L896.3 425.8" stroke="#bbb" stroke-width="0.6" fill="none" />
<rect x="952.1" y="423.8" width="105.1" height="3.8" fill="#fff" stroke="#aaa" stroke-width=".6"/>
<rect x="953.0" y="427.7" width="103.2" height="2.7" fill="#fff" stroke="#888" stroke-width=".7"/>
<path d="M952.1 425.8L1057.2 425.8" stroke="#bbb" stroke-width="0.6" fill="none" />
<rect x="1069.8" y="423.8" width="96.9" height="3.8" fill="#fff" stroke="#aaa" stroke-width=".6"/>
<rect x="1070.7" y="427.7" width="95.1" height="2.7" fill="#fff" stroke="#888" stroke-width=".7"/>
<path d="M1069.8 425.8L1166.7 425.8" stroke="#bbb" stroke-width="0.6" fill="none" />
<rect x="900.0" y="424.0" width="48.5" height="3.1" fill="#fff" stroke="#aaa" stroke-width=".5"/>
<path d="M900.0 425.7L948.5 425.7" stroke="#999" stroke-width="0.8" fill="none" stroke-dasharray="1 1.5"/>
<rect x="1187.2" y="260.0" width="6.2" height="142.5" fill="#fff" stroke="#999" stroke-width=".6"/>
<path d="M1189.0 260.0L1189.0 402.5" stroke="#bbb" stroke-width="0.6" fill="none" />
<path d="M1191.3 260.0L1191.3 402.5" stroke="#bbb" stroke-width="0.6" fill="none" />
<path d="M1187.2 306.6L1193.4 306.6" stroke="#999" stroke-width="0.7" fill="none" />
<path d="M1187.2 356.3L1193.4 356.3" stroke="#999" stroke-width="0.7" fill="none" />
<rect x="1187.2" y="135.3" width="5.9" height="23.8" fill="#fff" stroke="#999" stroke-width=".6"/>
<path d="M1190.2 135.3L1190.2 159.0" stroke="#999" stroke-width="0.6" fill="none" />
<rect x="654.8" y="260.0" width="4.8" height="142.5" fill="#fff" stroke="#aaa" stroke-width=".6"/>
<path d="M656.4 260.0L656.4 402.5" stroke="#ccc" stroke-width="0.6" fill="none" />
<rect x="654.8" y="306.6" width="4.8" height="4.0" fill="#ffffc2" />
<path d="M654.8 356.3L659.5 356.3" stroke="#aaa" stroke-width="0.7" fill="none" />
<path d="M658.2 211.1L658.2 427.3" stroke="#111" stroke-width="1.2" fill="none" />
<path d="M658.2 427.3L777.5 427.3" stroke="#111" stroke-width="1.1" fill="none" />
<path d="M777.5 421.7L777.5 427.3" stroke="#111" stroke-width="1.1" fill="none" />
<path d="M658.2 211.1L662.8 211.1" stroke="#111" stroke-width="1" fill="none" />
<path d="M658.2 244.0L662.8 244.0" stroke="#111" stroke-width="0.9" fill="none" />
<path d="M658.2 252.2L662.8 252.2" stroke="#111" stroke-width="0.9" fill="none" />
<path d="M658.2 287.8L662.8 287.8" stroke="#111" stroke-width="0.9" fill="none" />
<path d="M658.2 295.4L662.8 295.4" stroke="#111" stroke-width="0.9" fill="none" />
<path d="M658.2 330.8L662.8 330.8" stroke="#111" stroke-width="0.9" fill="none" />
<path d="M658.2 339.4L662.8 339.4" stroke="#111" stroke-width="0.9" fill="none" />
<path d="M658.2 374.7L662.8 374.7" stroke="#111" stroke-width="0.9" fill="none" />
<path d="M658.2 382.6L662.8 382.6" stroke="#111" stroke-width="0.9" fill="none" />
<path d="M658.2 252.2L662.8 250.6" stroke="#111" stroke-width="0.9" fill="none" />
<path d="M658.2 294.5L662.8 292.5" stroke="#111" stroke-width="0.9" fill="none" />
<path d="M658.2 339.4L662.8 337.4" stroke="#111" stroke-width="0.9" fill="none" />
<path d="M658.2 381.9L662.8 379.9" stroke="#111" stroke-width="0.9" fill="none" />
<path d="M658.2 425.3L662.8 423.3" stroke="#111" stroke-width="0.9" fill="none" />
<path d="M658.2 427.1L672.0 421.2" stroke="#111" stroke-width="0.8" fill="none" />
<g transform="translate(699.9 232.4) rotate(-19.5) scale(0.9135)"><rect x="-3.8" y="-5.2" width="7.6" height="10.4" fill="none" stroke="#f0f" stroke-width="1"/><text x="0" y="3.4" font-family="Liberation Sans, sans-serif" font-size="9.2" text-anchor="middle" fill="#111">2</text><text x="7.6" y="3.5" font-family="Liberation Sans, sans-serif" font-size="9.3" fill="#111" textLength="31.2" lengthAdjust="spacingAndGlyphs">Q335 A</text></g>
<g transform="translate(699.5 272.1) rotate(-21.5) scale(0.9135)"><rect x="-3.8" y="-5.2" width="7.6" height="10.4" fill="none" stroke="#f0f" stroke-width="1"/><text x="0" y="3.4" font-family="Liberation Sans, sans-serif" font-size="9.2" text-anchor="middle" fill="#111">1</text><text x="7.6" y="3.5" font-family="Liberation Sans, sans-serif" font-size="9.3" fill="#111" textLength="31.2" lengthAdjust="spacingAndGlyphs">Q335 A</text></g>
<g transform="translate(699.0 315.7) rotate(-21.5) scale(0.9135)"><rect x="-3.8" y="-5.2" width="7.6" height="10.4" fill="none" stroke="#f0f" stroke-width="1"/><text x="0" y="3.4" font-family="Liberation Sans, sans-serif" font-size="9.2" text-anchor="middle" fill="#111">1</text><text x="7.6" y="3.5" font-family="Liberation Sans, sans-serif" font-size="9.3" fill="#111" textLength="31.2" lengthAdjust="spacingAndGlyphs">Q335 A</text></g>
<g transform="translate(699.0 359.2) rotate(-21.5) scale(0.9135)"><rect x="-3.8" y="-5.2" width="7.6" height="10.4" fill="none" stroke="#f0f" stroke-width="1"/><text x="0" y="3.4" font-family="Liberation Sans, sans-serif" font-size="9.2" text-anchor="middle" fill="#111">1</text><text x="7.6" y="3.5" font-family="Liberation Sans, sans-serif" font-size="9.3" fill="#111" textLength="31.2" lengthAdjust="spacingAndGlyphs">Q335 A</text></g>
<g transform="translate(699.0 402.9) rotate(-21.5) scale(0.9135)"><rect x="-3.8" y="-5.2" width="7.6" height="10.4" fill="none" stroke="#f0f" stroke-width="1"/><text x="0" y="3.4" font-family="Liberation Sans, sans-serif" font-size="9.2" text-anchor="middle" fill="#111">1</text><text x="7.6" y="3.5" font-family="Liberation Sans, sans-serif" font-size="9.3" fill="#111" textLength="31.2" lengthAdjust="spacingAndGlyphs">Q335 A</text></g>
<rect x="654.6" y="495.9" width="539.0" height="3.1" fill="#ffffc2" />
<rect x="1190.5" y="495.9" width="3.1" height="137.7" fill="#ffffc2" />
<rect x="1190.5" y="776.1" width="3.1" height="27.7" fill="#ffffc2" />
<rect x="654.6" y="495.9" width="3.1" height="307.8" fill="#ffffc2" />
<rect x="654.6" y="800.7" width="27.4" height="3.0" fill="#ffffc2" />
<rect x="1166.7" y="800.7" width="26.9" height="3.0" fill="#ffffc2" />
<rect x="771.5" y="800.7" width="7.7" height="3.0" fill="#ffffc2" />
<rect x="657.7" y="499.0" width="532.8" height="3.6" fill="#aed7ae" />
<rect x="1187.1" y="499.0" width="3.4" height="134.6" fill="#aed7ae" />
<rect x="1187.1" y="776.1" width="3.4" height="24.8" fill="#aed7ae" />
<rect x="657.7" y="499.0" width="3.5" height="134.6" fill="#aed7ae" />
<rect x="657.7" y="776.1" width="3.5" height="24.7" fill="#aed7ae" />
<rect x="657.7" y="797.4" width="24.3" height="3.5" fill="#aed7ae" />
<rect x="1166.7" y="797.4" width="23.8" height="3.5" fill="#aed7ae" />
<rect x="771.5" y="797.4" width="7.7" height="3.5" fill="#aed7ae" />
<rect x="896.3" y="797.4" width="3.7" height="3.5" fill="#aed7ae" />
<rect x="948.5" y="797.4" width="3.7" height="3.5" fill="#aed7ae" />
<rect x="1057.2" y="797.4" width="12.6" height="3.5" fill="#aed7ae" />
<path d="M654.6 495.9H1193.6V803.7H654.6Z" stroke="#b9b9a0" stroke-width="0.7" fill="none" />
<path d="M657.8 584.2V499.0H1190.3V633.6" stroke="#4d5a3a" stroke-width="0.8" fill="none" />
<path d="M1190.3 776.1L1190.3 800.9" stroke="#333" stroke-width="0.9" fill="none" />
<path d="M777.5 801.1L1190.3 801.1" stroke="#3a3a3a" stroke-width="0.9" fill="none" />
<path d="M691.1 502.6L691.1 504.3" stroke="#aaa" stroke-width="1.2" fill="none" />
<path d="M720.4 502.6L720.4 504.3" stroke="#aaa" stroke-width="1.2" fill="none" />
<path d="M748.7 502.6L748.7 504.3" stroke="#aaa" stroke-width="1.2" fill="none" />
<path d="M777.3 502.6L777.3 504.3" stroke="#e99" stroke-width="1.2" fill="none" />
<path d="M850.1 502.6L850.1 504.3" stroke="#e99" stroke-width="1.2" fill="none" />
<path d="M888.5 502.6L888.5 504.3" stroke="#aaa" stroke-width="1.2" fill="none" />
<path d="M918.6 502.6L918.6 504.3" stroke="#aaa" stroke-width="1.2" fill="none" />
<path d="M949.7 502.6L949.7 504.3" stroke="#e99" stroke-width="1.2" fill="none" />
<path d="M1019.6 502.6L1019.6 504.3" stroke="#e99" stroke-width="1.2" fill="none" />
<rect x="751.1" y="494.3" width="24.5" height="8.0" fill="#fff" stroke="#8f8f8f" stroke-width=".8"/>
<path d="M751.1 497.1L775.5 497.1" stroke="#aaa" stroke-width="0.6" fill="none" />
<rect x="920.4" y="494.3" width="24.5" height="8.0" fill="#fff" stroke="#8f8f8f" stroke-width=".8"/>
<path d="M920.4 497.1L944.9 497.1" stroke="#aaa" stroke-width="0.6" fill="none" />
<rect x="990.4" y="494.3" width="24.5" height="8.0" fill="#fff" stroke="#8f8f8f" stroke-width=".8"/>
<path d="M990.4 497.1L1014.9 497.1" stroke="#aaa" stroke-width="0.6" fill="none" />
<rect x="1081.6" y="494.3" width="24.5" height="8.0" fill="#fff" stroke="#8f8f8f" stroke-width=".8"/>
<path d="M1081.6 497.1L1106.1 497.1" stroke="#aaa" stroke-width="0.6" fill="none" />
<rect x="681.7" y="797.4" width="89.8" height="3.8" fill="#fff" stroke="#aaa" stroke-width=".6"/>
<rect x="682.6" y="801.3" width="88.0" height="2.7" fill="#fff" stroke="#888" stroke-width=".7"/>
<path d="M681.7 799.4L771.5 799.4" stroke="#bbb" stroke-width="0.6" fill="none" />
<rect x="779.2" y="797.4" width="117.1" height="3.8" fill="#fff" stroke="#aaa" stroke-width=".6"/>
<rect x="780.1" y="801.3" width="115.3" height="2.7" fill="#fff" stroke="#888" stroke-width=".7"/>
<path d="M779.2 799.4L896.3 799.4" stroke="#bbb" stroke-width="0.6" fill="none" />
<rect x="952.1" y="797.4" width="105.1" height="3.8" fill="#fff" stroke="#aaa" stroke-width=".6"/>
<rect x="953.0" y="801.3" width="103.2" height="2.7" fill="#fff" stroke="#888" stroke-width=".7"/>
<path d="M952.1 799.4L1057.2 799.4" stroke="#bbb" stroke-width="0.6" fill="none" />
<rect x="1069.8" y="797.4" width="96.9" height="3.8" fill="#fff" stroke="#aaa" stroke-width=".6"/>
<rect x="1070.7" y="801.3" width="95.1" height="2.7" fill="#fff" stroke="#888" stroke-width=".7"/>
<path d="M1069.8 799.4L1166.7 799.4" stroke="#bbb" stroke-width="0.6" fill="none" />
<rect x="900.0" y="797.6" width="48.5" height="3.1" fill="#fff" stroke="#aaa" stroke-width=".5"/>
<path d="M900.0 799.3L948.5 799.3" stroke="#999" stroke-width="0.8" fill="none" stroke-dasharray="1 1.5"/>
<rect x="1187.2" y="633.6" width="6.2" height="142.5" fill="#fff" stroke="#999" stroke-width=".6"/>
<path d="M1189.0 633.6L1189.0 776.1" stroke="#bbb" stroke-width="0.6" fill="none" />
<path d="M1191.3 633.6L1191.3 776.1" stroke="#bbb" stroke-width="0.6" fill="none" />
<path d="M1187.2 680.2L1193.4 680.2" stroke="#999" stroke-width="0.7" fill="none" />
<path d="M1187.2 729.9L1193.4 729.9" stroke="#999" stroke-width="0.7" fill="none" />
<rect x="1187.2" y="508.9" width="5.9" height="23.8" fill="#fff" stroke="#999" stroke-width=".6"/>
<path d="M1190.2 508.9L1190.2 532.6" stroke="#999" stroke-width="0.6" fill="none" />
<rect x="654.8" y="633.6" width="4.8" height="142.5" fill="#fff" stroke="#aaa" stroke-width=".6"/>
<path d="M656.4 633.6L656.4 776.1" stroke="#ccc" stroke-width="0.6" fill="none" />
<rect x="654.8" y="680.2" width="4.8" height="4.0" fill="#ffffc2" />
<path d="M654.8 729.9L659.5 729.9" stroke="#aaa" stroke-width="0.7" fill="none" />
<path d="M658.2 584.7L658.2 800.9" stroke="#111" stroke-width="1.2" fill="none" />
<path d="M658.2 800.9L777.5 800.9" stroke="#111" stroke-width="1.1" fill="none" />
<path d="M777.5 795.3L777.5 800.9" stroke="#111" stroke-width="1.1" fill="none" />
<path d="M658.2 584.7L662.8 584.7" stroke="#111" stroke-width="1" fill="none" />
<path d="M658.2 617.6L662.8 617.6" stroke="#111" stroke-width="0.9" fill="none" />
<path d="M658.2 625.8L662.8 625.8" stroke="#111" stroke-width="0.9" fill="none" />
<path d="M658.2 661.4L662.8 661.4" stroke="#111" stroke-width="0.9" fill="none" />
<path d="M658.2 669.0L662.8 669.0" stroke="#111" stroke-width="0.9" fill="none" />
<path d="M658.2 704.4L662.8 704.4" stroke="#111" stroke-width="0.9" fill="none" />
<path d="M658.2 713.0L662.8 713.0" stroke="#111" stroke-width="0.9" fill="none" />
<path d="M658.2 748.3L662.8 748.3" stroke="#111" stroke-width="0.9" fill="none" />
<path d="M658.2 756.2L662.8 756.2" stroke="#111" stroke-width="0.9" fill="none" />
<path d="M658.2 625.8L662.8 624.2" stroke="#111" stroke-width="0.9" fill="none" />
<path d="M658.2 668.1L662.8 666.1" stroke="#111" stroke-width="0.9" fill="none" />
<path d="M658.2 713.0L662.8 711.0" stroke="#111" stroke-width="0.9" fill="none" />
<path d="M658.2 755.5L662.8 753.5" stroke="#111" stroke-width="0.9" fill="none" />
<path d="M658.2 798.9L662.8 796.9" stroke="#111" stroke-width="0.9" fill="none" />
<path d="M658.2 800.7L672.0 794.8" stroke="#111" stroke-width="0.8" fill="none" />
<g transform="translate(699.9 606.0) rotate(-19.5) scale(0.9135)"><rect x="-3.8" y="-5.2" width="7.6" height="10.4" fill="none" stroke="#f0f" stroke-width="1"/><text x="0" y="3.4" font-family="Liberation Sans, sans-serif" font-size="9.2" text-anchor="middle" fill="#111">2</text><text x="7.6" y="3.5" font-family="Liberation Sans, sans-serif" font-size="9.3" fill="#111" textLength="31.2" lengthAdjust="spacingAndGlyphs">Q335 A</text></g>
<g transform="translate(699.5 645.7) rotate(-21.5) scale(0.9135)"><rect x="-3.8" y="-5.2" width="7.6" height="10.4" fill="none" stroke="#f0f" stroke-width="1"/><text x="0" y="3.4" font-family="Liberation Sans, sans-serif" font-size="9.2" text-anchor="middle" fill="#111">1</text><text x="7.6" y="3.5" font-family="Liberation Sans, sans-serif" font-size="9.3" fill="#111" textLength="31.2" lengthAdjust="spacingAndGlyphs">Q335 A</text></g>
<g transform="translate(699.0 689.3) rotate(-21.5) scale(0.9135)"><rect x="-3.8" y="-5.2" width="7.6" height="10.4" fill="none" stroke="#f0f" stroke-width="1"/><text x="0" y="3.4" font-family="Liberation Sans, sans-serif" font-size="9.2" text-anchor="middle" fill="#111">1</text><text x="7.6" y="3.5" font-family="Liberation Sans, sans-serif" font-size="9.3" fill="#111" textLength="31.2" lengthAdjust="spacingAndGlyphs">Q335 A</text></g>
<g transform="translate(699.0 732.8) rotate(-21.5) scale(0.9135)"><rect x="-3.8" y="-5.2" width="7.6" height="10.4" fill="none" stroke="#f0f" stroke-width="1"/><text x="0" y="3.4" font-family="Liberation Sans, sans-serif" font-size="9.2" text-anchor="middle" fill="#111">1</text><text x="7.6" y="3.5" font-family="Liberation Sans, sans-serif" font-size="9.3" fill="#111" textLength="31.2" lengthAdjust="spacingAndGlyphs">Q335 A</text></g>
<g transform="translate(699.0 776.5) rotate(-21.5) scale(0.9135)"><rect x="-3.8" y="-5.2" width="7.6" height="10.4" fill="none" stroke="#f0f" stroke-width="1"/><text x="0" y="3.4" font-family="Liberation Sans, sans-serif" font-size="9.2" text-anchor="middle" fill="#111">1</text><text x="7.6" y="3.5" font-family="Liberation Sans, sans-serif" font-size="9.3" fill="#111" textLength="31.2" lengthAdjust="spacingAndGlyphs">Q335 A</text></g>
<rect x="637.0" y="462.0" width="573.0" height="1.8" fill="#e6e6e9" />
<rect x="1210.0" y="91.0" width="2.0" height="747.0" fill="#e6e6e9" />
<path d="M640.0 463.0L1208.0 463.0" stroke="#dcdcdc" stroke-width="0.9" fill="none" />
<text x="668" y="461.5" font-family="Liberation Sans, sans-serif" font-size="5.2" fill="#d2d2d2" text-anchor="middle">1.12</text>
<text x="727" y="461.5" font-family="Liberation Sans, sans-serif" font-size="5.2" fill="#d2d2d2" text-anchor="middle">3.70</text>
<text x="775" y="458.5" font-family="Liberation Sans, sans-serif" font-size="5.2" fill="#d2d2d2" text-anchor="middle">32</text>
<text x="838" y="461.5" font-family="Liberation Sans, sans-serif" font-size="5.2" fill="#d2d2d2" text-anchor="middle">4.83</text>
<text x="897" y="458.5" font-family="Liberation Sans, sans-serif" font-size="5.2" fill="#d2d2d2" text-anchor="middle">15</text>
<text x="922" y="461.5" font-family="Liberation Sans, sans-serif" font-size="5.2" fill="#d2d2d2" text-anchor="middle">2.00</text>
<text x="950" y="458.5" font-family="Liberation Sans, sans-serif" font-size="5.2" fill="#d2d2d2" text-anchor="middle">15</text>
<text x="1015" y="461.5" font-family="Liberation Sans, sans-serif" font-size="5.2" fill="#d2d2d2" text-anchor="middle">4.33</text>
<text x="1063" y="458.5" font-family="Liberation Sans, sans-serif" font-size="5.2" fill="#d2d2d2" text-anchor="middle">52</text>
<text x="1117" y="461.5" font-family="Liberation Sans, sans-serif" font-size="5.2" fill="#d2d2d2" text-anchor="middle">4.00</text>
<text x="1178" y="461.5" font-family="Liberation Sans, sans-serif" font-size="5.2" fill="#d2d2d2" text-anchor="middle">1.12</text>
<text x="762" y="469.5" font-family="Liberation Sans, sans-serif" font-size="5.2" fill="#d2d2d2" text-anchor="middle">1.10</text>
<text x="932" y="469.5" font-family="Liberation Sans, sans-serif" font-size="5.2" fill="#d2d2d2" text-anchor="middle">1.10</text>
<text x="1003" y="469.5" font-family="Liberation Sans, sans-serif" font-size="5.2" fill="#d2d2d2" text-anchor="middle">1.10</text>
<text x="1093" y="469.5" font-family="Liberation Sans, sans-serif" font-size="5.2" fill="#d2d2d2" text-anchor="middle">1.10</text>
<text x="668" y="835.5" font-family="Liberation Sans, sans-serif" font-size="5.2" fill="#cfcfcf" text-anchor="middle">1.12</text>
<text x="727" y="835.5" font-family="Liberation Sans, sans-serif" font-size="5.2" fill="#cfcfcf" text-anchor="middle">3.70</text>
<text x="775" y="832.5" font-family="Liberation Sans, sans-serif" font-size="5.2" fill="#cfcfcf" text-anchor="middle">32</text>
<text x="838" y="835.5" font-family="Liberation Sans, sans-serif" font-size="5.2" fill="#cfcfcf" text-anchor="middle">4.83</text>
<text x="897" y="832.5" font-family="Liberation Sans, sans-serif" font-size="5.2" fill="#cfcfcf" text-anchor="middle">15</text>
<text x="922" y="835.5" font-family="Liberation Sans, sans-serif" font-size="5.2" fill="#cfcfcf" text-anchor="middle">2.09</text>
<text x="950" y="832.5" font-family="Liberation Sans, sans-serif" font-size="5.2" fill="#cfcfcf" text-anchor="middle">15</text>
<text x="1015" y="835.5" font-family="Liberation Sans, sans-serif" font-size="5.2" fill="#cfcfcf" text-anchor="middle">4.33</text>
<text x="1063" y="832.5" font-family="Liberation Sans, sans-serif" font-size="5.2" fill="#cfcfcf" text-anchor="middle">.52</text>
<text x="1117" y="835.5" font-family="Liberation Sans, sans-serif" font-size="5.2" fill="#cfcfcf" text-anchor="middle">4.00</text>
<text x="1178" y="835.5" font-family="Liberation Sans, sans-serif" font-size="5.2" fill="#cfcfcf" text-anchor="middle">1.12</text>
<path d="M640.0 837.5L1208.0 837.5" stroke="#dcdcdc" stroke-width="0.9" fill="none" />
<text x="762" y="96.5" font-family="Liberation Sans, sans-serif" font-size="5.2" fill="#d0d0d0" text-anchor="middle">1.10</text>
<text x="932" y="96.5" font-family="Liberation Sans, sans-serif" font-size="5.2" fill="#d0d0d0" text-anchor="middle">1.10</text>
<text x="1003" y="96.5" font-family="Liberation Sans, sans-serif" font-size="5.2" fill="#d0d0d0" text-anchor="middle">1.10</text>
<text x="1093" y="96.5" font-family="Liberation Sans, sans-serif" font-size="5.2" fill="#d0d0d0" text-anchor="middle">1.10</text>
<rect x="901.2" y="91.0" width="45.6" height="18.6" fill="#f5f6f9" stroke="#d8dbe4" stroke-width="1"/>
<text x="924" y="104.1" font-family="Liberation Sans, sans-serif" font-size="9.7" fill="#c3c7d0" text-anchor="middle" textLength="34" lengthAdjust="spacingAndGlyphs">AS-ETA</text>
<rect x="902.5" y="464.5" width="42.5" height="18.0" fill="#f1f4fa" stroke="#c9d0e2" stroke-width="1"/>
<text x="923.7" y="476.9" font-family="Liberation Sans, sans-serif" font-size="9.7" fill="#9fb0d0" text-anchor="middle" textLength="31.5" lengthAdjust="spacingAndGlyphs">AS-XSI</text>
<path d="M637 91.5h11.5l-11.5 11.5z" fill="#9aacc9"/><path d="M1210 91.5h-9l9 9z" fill="#b4c0d6"/>
<path d="M637 462h9l-9 -9z" fill="#8fa3c4"/><path d="M637 464h9l-9 9z" fill="#b4c0d6"/><path d="M1210 462h-9l9 -9z" fill="#b4c0d6"/><path d="M1210 464h-9l9 9z" fill="#c4cde0"/>
<path d="M637 837.5h11l-11 -11z" fill="#5b79a8"/><path d="M1210 837.5h-11l11 -11z" fill="#5b79a8"/><path d="M1212 837.5h9l-9 -9z" fill="#9aacc9"/><path d="M1212 450h6l-6 -6z M1212 476 h6l-6 6z" fill="#aab6d0"/>
<circle cx="648.8" cy="450" r="5.2" fill="#fff" stroke="#3a5c9c" stroke-width="1.2" stroke-dasharray="2 1.4"/><rect x="647.0" y="448.2" width="3.6" height="3.6" fill="#e04050" stroke="#b02030" stroke-width=".5"/>
<circle cx="648.8" cy="825.5" r="5.2" fill="#fff" stroke="#3a5c9c" stroke-width="1.2" stroke-dasharray="2 1.4"/><rect x="647.0" y="823.7" width="3.6" height="3.6" fill="#e04050" stroke="#b02030" stroke-width=".5"/>
<circle cx="1224" cy="825.5" r="5.2" fill="#fff" stroke="#3a5c9c" stroke-width="1.2" stroke-dasharray="2 1.4"/><rect x="1222.2" y="823.7" width="3.6" height="3.6" fill="#e04050" stroke="#b02030" stroke-width=".5"/>
</svg>
<div id="info"></div>
<svg style="left:0;top:0" width="1396" height="880" viewBox="0 0 1396 880">
<rect x="1212.0" y="90.0" width="184.0" height="748.0" fill="#c8c8c8"/>
<rect x="1212.0" y="91.0" width="184.0" height="373.8" fill="#0000cd"/>
<g transform="scale(1.55,1)"><text x="811.58 821.48 831.39 841.29 851.19 861.10 871.00" y="108.7" font-family="DejaVu Sans Light, DejaVu Sans, sans-serif" font-weight="200" font-size="13.7" fill="#f4f4ff" text-anchor="middle" opacity="1">Gewicht</text></g>
<g transform="scale(1.55,1)"><text x="826.44 836.34 846.24 856.15" y="133.6" font-family="DejaVu Sans Light, DejaVu Sans, sans-serif" font-weight="200" font-size="13.7" fill="#f4f4ff" text-anchor="middle" opacity="1">[kg]</text></g>
<rect x="1212.0" y="140.8" width="184.0" height="24.9" fill="#c8c8c8"/>
<g transform="scale(1.55,1)"><text x="851.68 861.58 871.48 881.39 891.29" y="158.5" font-family="DejaVu Sans Light, DejaVu Sans, sans-serif" font-weight="200" font-size="13.7" fill="#2c2c2c" text-anchor="middle" opacity="1">328.6</text></g>
<g transform="scale(1.55,1)"><text x="811.58 821.48 831.39 841.29 851.19 861.10 871.00" y="208.3" font-family="DejaVu Sans Light, DejaVu Sans, sans-serif" font-weight="200" font-size="13.7" fill="#f4f4ff" text-anchor="middle" opacity="1">[cm2/m]</text></g>
<rect x="1279.0" y="215.5" width="117.0" height="24.9" fill="#c8c8c8"/>
<g transform="scale(1.55,1)"><text x="793.65 803.55 813.45" y="233.2" font-family="DejaVu Sans Light, DejaVu Sans, sans-serif" font-weight="200" font-size="13.7" fill="#f4f4ff" text-anchor="middle" opacity="1">xsi</text></g>
<g transform="scale(1.55,1)"><text x="862.87 872.77 882.68 892.58" y="233.2" font-family="DejaVu Sans Light, DejaVu Sans, sans-serif" font-weight="200" font-size="13.7" fill="#2c2c2c" text-anchor="middle" opacity="1">2.79</text></g>
<rect x="1279.0" y="240.4" width="117.0" height="24.9" fill="#c8c8c8"/>
<g transform="scale(1.55,1)"><text x="793.65 803.55 813.45" y="258.1" font-family="DejaVu Sans Light, DejaVu Sans, sans-serif" font-weight="200" font-size="13.7" fill="#f4f4ff" text-anchor="middle" opacity="1">eta</text></g>
<g transform="scale(1.55,1)"><text x="862.87 872.77 882.68 892.58" y="258.1" font-family="DejaVu Sans Light, DejaVu Sans, sans-serif" font-weight="200" font-size="13.7" fill="#2c2c2c" text-anchor="middle" opacity="1">2.03</text></g>
<g transform="scale(1.55,1)"><text x="801.68 811.58 821.48 831.39 841.29 851.19 861.10 871.00 880.90" y="283.0" font-family="DejaVu Sans Light, DejaVu Sans, sans-serif" font-weight="200" font-size="13.7" fill="#f4f4ff" text-anchor="middle" opacity="1">Parameter</text></g>
<rect x="1279.0" y="290.2" width="117.0" height="24.9" fill="#c8c8c8"/>
<g transform="scale(1.55,1)"><text x="788.69 798.60 808.50 818.40" y="307.9" font-family="DejaVu Sans Light, DejaVu Sans, sans-serif" font-weight="200" font-size="13.7" fill="#f4f4ff" text-anchor="middle" opacity="1">TbNr</text></g>
<g transform="scale(1.55,1)"><text x="862.87 872.77 882.68 892.58" y="307.9" font-family="DejaVu Sans Light, DejaVu Sans, sans-serif" font-weight="200" font-size="13.7" fill="#2c2c2c" text-anchor="middle" opacity="1">1611</text></g>
<rect x="1279.0" y="315.1" width="117.0" height="24.9" fill="#c8c8c8"/>
<g transform="scale(1.55,1)"><text x="788.69 798.60 808.50 818.40" y="332.8" font-family="DejaVu Sans Light, DejaVu Sans, sans-serif" font-weight="200" font-size="13.7" fill="#f4f4ff" text-anchor="middle" opacity="1">Verb</text></g>
<g transform="scale(1.55,1)"><text x="862.87" y="332.8" font-family="DejaVu Sans Light, DejaVu Sans, sans-serif" font-weight="200" font-size="13.7" fill="#2c2c2c" text-anchor="middle" opacity="1">I</text></g>
<rect x="1279.0" y="340.0" width="117.0" height="24.9" fill="#c8c8c8"/>
<g transform="scale(1.55,1)"><text x="793.65 803.55 813.45" y="357.7" font-family="DejaVu Sans Light, DejaVu Sans, sans-serif" font-weight="200" font-size="13.7" fill="#f4f4ff" text-anchor="middle" opacity="1">D/Z</text></g>
<g transform="scale(1.55,1)"><text x="852.97 862.87 872.77" y="357.7" font-family="DejaVu Sans Light, DejaVu Sans, sans-serif" font-weight="200" font-size="13.7" fill="#2c2c2c" text-anchor="middle" opacity="1">Zug</text></g>
<rect x="1279.0" y="364.9" width="117.0" height="24.9" fill="#c8c8c8"/>
<g transform="scale(1.55,1)"><text x="788.69 798.60 808.50 818.40" y="382.6" font-family="DejaVu Sans Light, DejaVu Sans, sans-serif" font-weight="200" font-size="13.7" fill="#f4f4ff" text-anchor="middle" opacity="1">Lage</text></g>
<g transform="scale(1.55,1)"><text x="847.03 856.93 866.83 876.74 886.64" y="382.6" font-family="DejaVu Sans Light, DejaVu Sans, sans-serif" font-weight="200" font-size="13.7" fill="#2c2c2c" text-anchor="middle" opacity="1">Unten</text></g>
<rect x="1279.0" y="389.8" width="117.0" height="24.9" fill="#c8c8c8"/>
<g transform="scale(1.55,1)"><text x="788.69 798.60 808.50 818.40" y="407.5" font-family="DejaVu Sans Light, DejaVu Sans, sans-serif" font-weight="200" font-size="13.7" fill="#f4f4ff" text-anchor="middle" opacity="1">Abst</text></g>
<g transform="scale(1.55,1)"><text x="850.49 860.40 870.30 880.20" y="407.5" font-family="DejaVu Sans Light, DejaVu Sans, sans-serif" font-weight="200" font-size="13.7" fill="#2c2c2c" text-anchor="middle" opacity="1">Auto</text></g>
<rect x="1279.0" y="414.7" width="117.0" height="24.9" fill="#c8c8c8"/>
<g transform="scale(1.55,1)"><text x="798.60 808.50" y="432.4" font-family="DejaVu Sans Light, DejaVu Sans, sans-serif" font-weight="200" font-size="13.7" fill="#f4f4ff" text-anchor="middle" opacity="1">Sw</text></g>
<g transform="scale(1.55,1)"><text x="862.87 872.77 882.68 892.58" y="432.4" font-family="DejaVu Sans Light, DejaVu Sans, sans-serif" font-weight="200" font-size="13.7" fill="#2c2c2c" text-anchor="middle" opacity="1">0.23</text></g>
<g transform="scale(1.55,1)"><text x="811.58 821.48 831.39 841.29 851.19 861.10 871.00" y="457.3" font-family="DejaVu Sans Light, DejaVu Sans, sans-serif" font-weight="200" font-size="13.7" fill="#f4f4ff" text-anchor="middle" opacity="1">Bereich</text></g>
<rect x="1212.0" y="214.7" width="184.0" height="1.6" fill="#00006e"/>
<rect x="1212.0" y="239.6" width="67.0" height="1.6" fill="#00006e"/>
<rect x="1279.0" y="239.8" width="117.0" height="1.2" fill="#e4e4e4"/>
<rect x="1212.0" y="264.5" width="184.0" height="1.6" fill="#00006e"/>
<rect x="1212.0" y="289.4" width="184.0" height="1.6" fill="#00006e"/>
<rect x="1212.0" y="314.3" width="67.0" height="1.6" fill="#00006e"/>
<rect x="1279.0" y="314.5" width="117.0" height="1.2" fill="#e4e4e4"/>
<rect x="1212.0" y="339.2" width="67.0" height="1.6" fill="#00006e"/>
<rect x="1279.0" y="339.4" width="117.0" height="1.2" fill="#e4e4e4"/>
<rect x="1212.0" y="364.1" width="67.0" height="1.6" fill="#00006e"/>
<rect x="1279.0" y="364.3" width="117.0" height="1.2" fill="#e4e4e4"/>
<rect x="1212.0" y="389.0" width="67.0" height="1.6" fill="#00006e"/>
<rect x="1279.0" y="389.2" width="117.0" height="1.2" fill="#e4e4e4"/>
<rect x="1212.0" y="413.9" width="67.0" height="1.6" fill="#00006e"/>
<rect x="1279.0" y="414.1" width="117.0" height="1.2" fill="#e4e4e4"/>
<rect x="1212.0" y="438.8" width="184.0" height="1.6" fill="#00006e"/>
<rect x="1212.0" y="140.3" width="184.0" height="1.0" fill="#3030b0"/>
<rect x="1212.0" y="165.2" width="184.0" height="1.0" fill="#3030b0"/>
<rect x="1212.0" y="464.3" width="184.0" height="25.3" fill="#ffffff"/>
<g transform="scale(1.55,1)"><text x="801.94 811.84 821.74 831.65" y="482.2" font-family="DejaVu Sans Light, DejaVu Sans, sans-serif" font-weight="200" font-size="13.7" fill="#2c2c2c" text-anchor="middle" opacity="1">0.00</text></g>
<rect x="1212.0" y="489.2" width="184.0" height="25.3" fill="#f0efb9"/>
<g transform="scale(1.55,1)"><text x="801.94 811.84 821.74 831.65 841.55 851.45 861.35 871.26 881.16 891.06" y="507.1" font-family="DejaVu Sans Light, DejaVu Sans, sans-serif" font-weight="200" font-size="13.7" fill="#2c2c2c" text-anchor="middle" opacity="1">0.00- 0.23</text></g>
<rect x="1212.0" y="514.1" width="184.0" height="25.3" fill="#ffff00"/>
<g transform="scale(1.55,1)"><text x="801.94 811.84 821.74 831.65 841.55 851.45 861.35 871.26 881.16 891.06" y="532.0" font-family="DejaVu Sans Light, DejaVu Sans, sans-serif" font-weight="200" font-size="13.7" fill="#2c2c2c" text-anchor="middle" opacity="1">0.23- 0.46</text></g>
<rect x="1212.0" y="539.0" width="184.0" height="25.3" fill="#deff64"/>
<g transform="scale(1.55,1)"><text x="801.94 811.84 821.74 831.65 841.55 851.45 861.35 871.26 881.16 891.06" y="556.9" font-family="DejaVu Sans Light, DejaVu Sans, sans-serif" font-weight="200" font-size="13.7" fill="#2c2c2c" text-anchor="middle" opacity="1">0.46- 0.70</text></g>
<rect x="1212.0" y="563.9" width="184.0" height="25.3" fill="#00ffff"/>
<g transform="scale(1.55,1)"><text x="801.94 811.84 821.74 831.65 841.55 851.45 861.35 871.26 881.16 891.06" y="581.8" font-family="DejaVu Sans Light, DejaVu Sans, sans-serif" font-weight="200" font-size="13.7" fill="#2c2c2c" text-anchor="middle" opacity="1">0.70- 0.93</text></g>
<rect x="1212.0" y="588.8" width="184.0" height="25.3" fill="#00ff00"/>
<g transform="scale(1.55,1)"><text x="801.94 811.84 821.74 831.65 841.55 851.45 861.35 871.26 881.16 891.06" y="606.7" font-family="DejaVu Sans Light, DejaVu Sans, sans-serif" font-weight="200" font-size="13.7" fill="#2c2c2c" text-anchor="middle" opacity="1">0.93- 1.16</text></g>
<rect x="1212.0" y="613.7" width="184.0" height="25.3" fill="#c8c434"/>
<g transform="scale(1.55,1)"><text x="801.94 811.84 821.74 831.65 841.55 851.45 861.35 871.26 881.16 891.06" y="631.6" font-family="DejaVu Sans Light, DejaVu Sans, sans-serif" font-weight="200" font-size="13.7" fill="#2c2c2c" text-anchor="middle" opacity="1">1.16- 1.39</text></g>
<rect x="1212.0" y="638.6" width="184.0" height="25.3" fill="#ff00ff"/>
<g transform="scale(1.55,1)"><text x="801.94 811.84 821.74 831.65 841.55 851.45 861.35 871.26 881.16 891.06" y="656.5" font-family="DejaVu Sans Light, DejaVu Sans, sans-serif" font-weight="200" font-size="13.7" fill="#ffd8ff" text-anchor="middle" opacity="1">1.40- 1.63</text></g>
<rect x="1212.0" y="663.5" width="184.0" height="25.3" fill="#ff8000"/>
<g transform="scale(1.55,1)"><text x="801.94 811.84 821.74 831.65 841.55 851.45 861.35 871.26 881.16 891.06" y="681.4" font-family="DejaVu Sans Light, DejaVu Sans, sans-serif" font-weight="200" font-size="13.7" fill="#fff0e0" text-anchor="middle" opacity="1">1.63- 1.86</text></g>
<rect x="1212.0" y="688.4" width="184.0" height="25.3" fill="#c89632"/>
<g transform="scale(1.55,1)"><text x="801.94 811.84 821.74 831.65 841.55 851.45 861.35 871.26 881.16 891.06" y="706.3" font-family="DejaVu Sans Light, DejaVu Sans, sans-serif" font-weight="200" font-size="13.7" fill="#fff" text-anchor="middle" opacity="1">1.86- 2.09</text></g>
<rect x="1212.0" y="713.3" width="184.0" height="25.3" fill="#c86432"/>
<g transform="scale(1.55,1)"><text x="801.94 811.84 821.74 831.65 841.55 851.45 861.35 871.26 881.16 891.06" y="731.2" font-family="DejaVu Sans Light, DejaVu Sans, sans-serif" font-weight="200" font-size="13.7" fill="#fff" text-anchor="middle" opacity="1">2.09- 2.32</text></g>
<rect x="1212.0" y="738.2" width="184.0" height="25.3" fill="#966432"/>
<g transform="scale(1.55,1)"><text x="801.94 811.84 821.74 831.65 841.55 851.45 861.35 871.26 881.16 891.06" y="756.1" font-family="DejaVu Sans Light, DejaVu Sans, sans-serif" font-weight="200" font-size="13.7" fill="#fff" text-anchor="middle" opacity="1">2.32- 2.56</text></g>
<rect x="1212.0" y="763.1" width="184.0" height="25.3" fill="#7d1ebe"/>
<g transform="scale(1.55,1)"><text x="841.55 851.45 861.35 871.26 881.16 891.06" y="781.0" font-family="DejaVu Sans Light, DejaVu Sans, sans-serif" font-weight="200" font-size="13.7" fill="#fff" text-anchor="middle" opacity="1">&gt; 2.56</text></g>
<rect x="1287.0" y="91.0" width="34.0" height="19.0" fill="rgba(170,170,240,.75)"/>
<text x="1304.3" y="103.6" font-family="Liberation Sans, sans-serif" font-size="8.6" fill="#5a5ad6" text-anchor="middle" textLength="21.5">INFO</text>
<path d="M1212 91 h9 l-9 9z" fill="#2a3fc0" opacity=".8"/><path d="M1396 91 h-9 l9 9z" fill="#2a3fc0" opacity=".8"/>
<circle cx="1224" cy="825.5" r="5.2" fill="#fff" stroke="#3a5c9c" stroke-width="1.2" stroke-dasharray="2 1.4"/><rect x="1222.2" y="823.7" width="3.6" height="3.6" fill="#e04050" stroke="#b02030" stroke-width=".5"/>
<path d="M1212 837.5h9l-9 -9z" fill="#9aacc9"/><path d="M1396 837.5h-9l9 -9z" fill="#9aacc9"/>
</svg>
<div id="side">
<div class="st" style="top:47.0px">Eigenschaften</div>
<div class="st" style="top:152.5px">Bibliothek</div>
<div class="st" style="top:258.0px">Objekte</div>
<div class="st" style="top:364.0px">Ebenen</div>
<div class="st" style="top:469.5px">Task Board</div>
<div class="st" style="top:575.0px">Connect</div>
<div class="st" style="top:679.5px">Layer</div>
<div class="sl" style="top:106.0px"></div>
<div class="sv" style="top:0.0px;height:106.0px;background:#b9bcc6"></div>
<div class="sl" style="top:211.5px"></div>
<div class="sv" style="top:109.0px;height:102.5px;background:#b9bcc6"></div>
<div class="sl" style="top:317.0px"></div>
<div class="sv" style="top:214.5px;height:102.5px;background:#b9bcc6"></div>
<div class="sl" style="top:422.5px"></div>
<div class="sv" style="top:320.0px;height:102.5px;background:#b9bcc6"></div>
<div class="sl" style="top:528.0px"></div>
<div class="sv" style="top:425.5px;height:102.5px;background:#b9bcc6"></div>
<div class="sl" style="top:633.5px"></div>
<div class="sv" style="top:531.0px;height:102.5px;background:#d2d4dc"></div>
<div class="sl" style="top:742.0px"></div>
<div class="sv" style="top:636.5px;height:105.5px;background:#b9bcc6"></div>
</div>
<div id="cmd"><div class="box"></div></div>
<span style="position:absolute;left:8.6px;top:843.6px;font-size:9px;line-height:9px;letter-spacing:-0.22px;white-space:nowrap;color:#000;font-weight:bold;">Klick links zum Auswählen, Strg+Klick zum Hinzufügen, Umschalt+Klick zur Segmentwahl</span>
<div id="status"></div>
<span style="position:absolute;left:0.0px;top:863.2px;font-size:8.8px;line-height:8.8px;letter-spacing:-0.15px;white-space:nowrap;color:#3a3a3a;">Drücken Sie F1, um Hilfe zu erhalten.</span>
<span style="position:absolute;left:719.4px;top:863.2px;font-size:8.8px;line-height:8.8px;letter-spacing:-0.11px;white-space:nowrap;color:#3a3a3a;">Land:</span>
<span style="position:absolute;left:746.4px;top:863.2px;font-size:8.8px;line-height:8.8px;letter-spacing:-0.15px;white-space:nowrap;color:#111;">Deutschland</span>
<span style="position:absolute;left:854.5px;top:863.2px;font-size:8.8px;line-height:8.8px;letter-spacing:-0.05px;white-space:nowrap;color:#3a3a3a;">Zeichnungstyp:</span>
<span style="position:absolute;left:919.8px;top:863.2px;font-size:8.8px;line-height:8.8px;letter-spacing:-0.08px;white-space:nowrap;color:#111;">Entwurfszeichnung</span>
<span style="position:absolute;left:1093.8px;top:863.2px;font-size:8.8px;line-height:8.8px;letter-spacing:-0.15px;white-space:nowrap;color:#3a3a3a;">Maßstab:</span>
<span style="position:absolute;left:1134.7px;top:863.2px;font-size:8.8px;line-height:8.8px;letter-spacing:-0.39px;white-space:nowrap;color:#111;">1 : 100</span>
<span style="position:absolute;left:1184.5px;top:863.2px;font-size:8.8px;line-height:8.8px;letter-spacing:-0.36px;white-space:nowrap;color:#3a3a3a;">Länge:</span>
<span style="position:absolute;left:1216.5px;top:863.2px;font-size:8.8px;line-height:8.8px;letter-spacing:0.00px;white-space:nowrap;color:#111;">m</span>
<span style="position:absolute;left:1251.8px;top:863.2px;font-size:8.8px;line-height:8.8px;letter-spacing:-0.11px;white-space:nowrap;color:#3a3a3a;">Winkel:</span>
<span style="position:absolute;left:1286.2px;top:863.2px;font-size:8.8px;line-height:8.8px;letter-spacing:-0.46px;white-space:nowrap;color:#111;">0.000</span>
<span style="position:absolute;left:1321.0px;top:863.2px;font-size:8.8px;line-height:8.8px;letter-spacing:-0.24px;white-space:nowrap;color:#111;">deg</span>
<span style="position:absolute;left:1358.0px;top:863.2px;font-size:8.8px;line-height:8.8px;letter-spacing:-2.07px;white-space:nowrap;color:#3a3a3a;">%:</span>
<span style="position:absolute;left:1373.0px;top:863.2px;font-size:8.8px;line-height:8.8px;letter-spacing:0.00px;white-space:nowrap;color:#111;">2</span>
<div class="abs" style="left:851.0px;top:862px;width:1px;height:13px;background:#d0d0d0"></div>
<div class="abs" style="left:1090.5px;top:862px;width:1px;height:13px;background:#d0d0d0"></div>
<div class="abs" style="left:1180.5px;top:862px;width:1px;height:13px;background:#d0d0d0"></div>
<div class="abs" style="left:1247.0px;top:862px;width:1px;height:13px;background:#d0d0d0"></div>
<div class="abs" style="left:1317.0px;top:862px;width:1px;height:13px;background:#d0d0d0"></div>
<div class="abs" style="left:1354.5px;top:862px;width:1px;height:13px;background:#d0d0d0"></div>
</body>
</html>
